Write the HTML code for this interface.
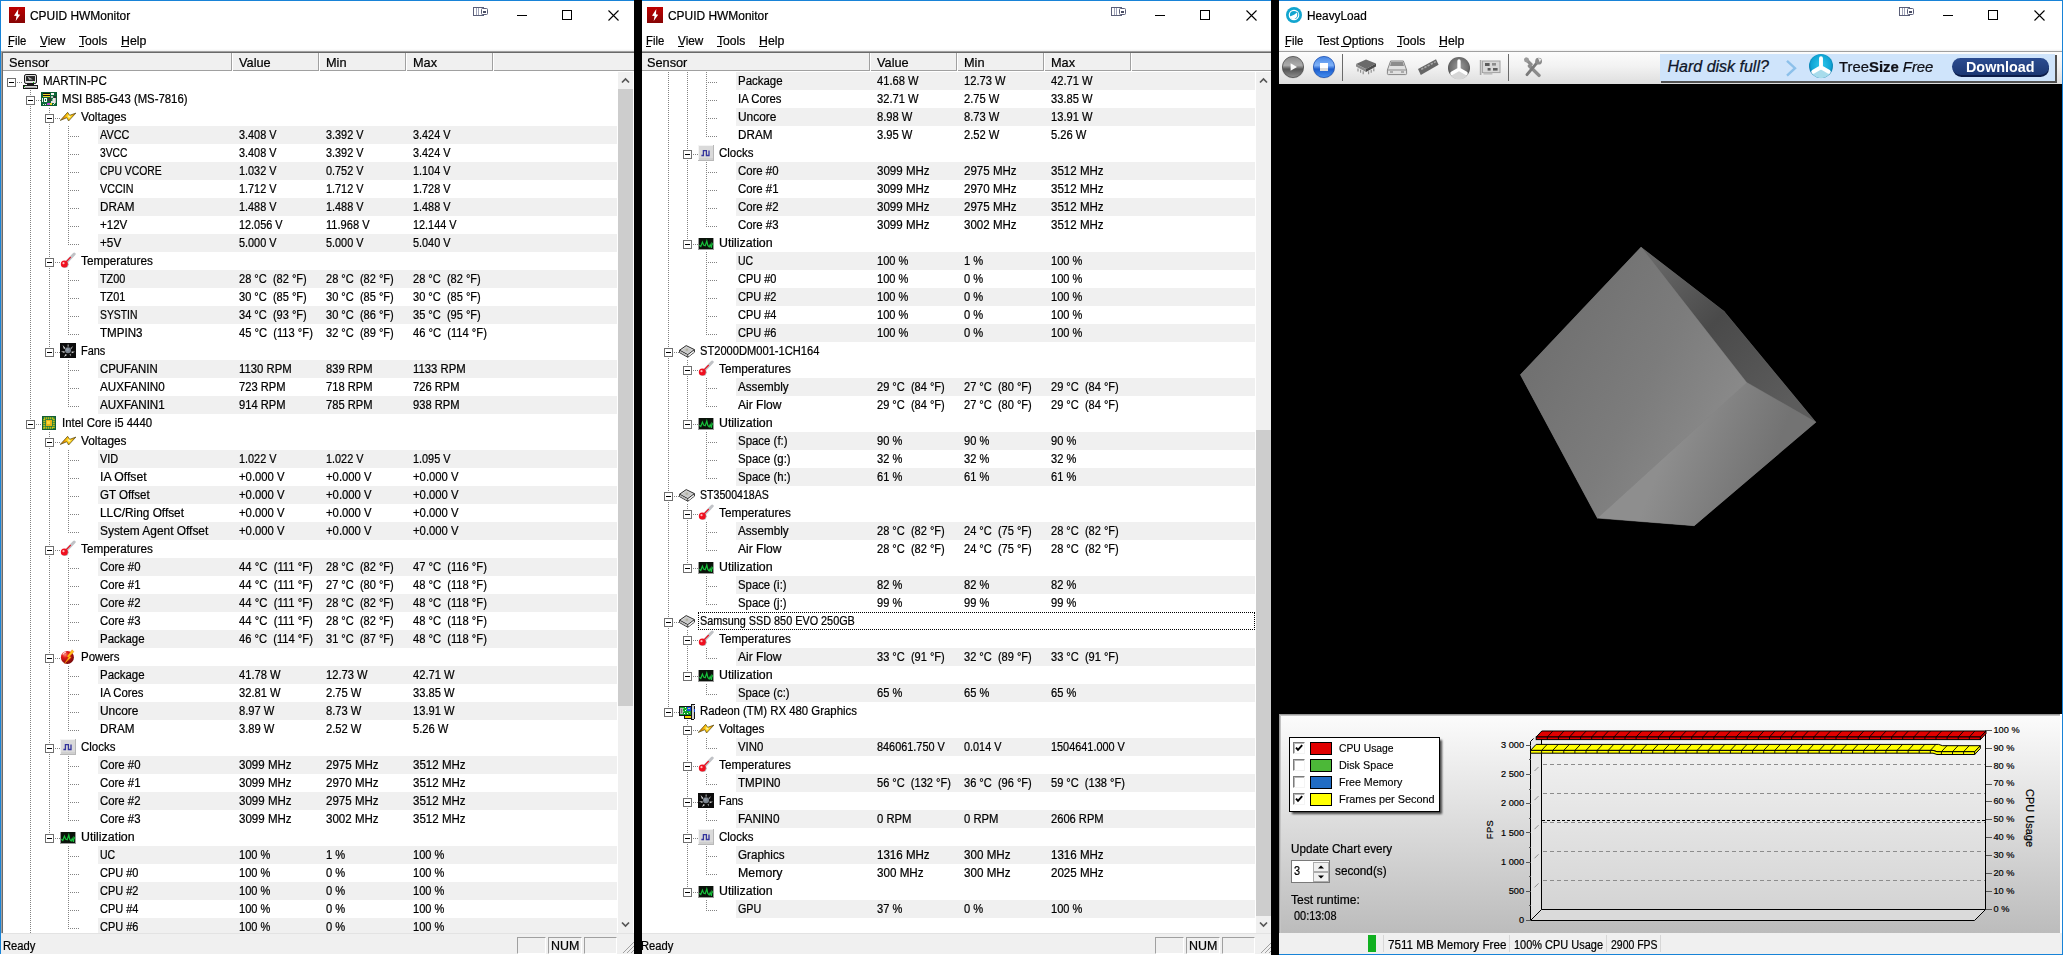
<!DOCTYPE html><html><head><meta charset="utf-8"><title>screenshot</title><style>
html,body{margin:0;padding:0}
body{width:2063px;height:955px;background:#000;position:relative;overflow:hidden;font-family:"Liberation Sans",sans-serif}
.win{position:absolute;overflow:hidden}
.in{position:absolute;top:0;width:2100px;height:955px}
i,svg,.t,.a,b{position:absolute;display:block}
.t{white-space:pre;font:12px/18px "Liberation Sans",sans-serif;color:#000;transform-origin:0 0;-webkit-text-stroke:.22px #000}
.a{white-space:pre;font-family:"Liberation Sans",sans-serif;color:#000;-webkit-text-stroke:.15px #000}
.vd{width:1px;background:linear-gradient(180deg,#828282 50%,transparent 50%) 0 0/1px 2px}
.hd{height:1px;background:linear-gradient(90deg,#828282 50%,transparent 50%) 0 0/2px 1px}
.xb{width:7px;height:7px;border:1px solid #6f6f6f;background:#fff}
.xb b{left:1px;top:3px;width:5px;height:1px;background:#000}
.fr{border:1px dotted #000}
.pane{border-top:1px solid #a0a0a0;border-left:1px solid #a0a0a0;border-right:1px solid #fff;border-bottom:1px solid #fff}
.cb{width:10px;height:10px;background:#fff;border:1px solid;border-color:#7c7c7c #f4f4f4 #f4f4f4 #7c7c7c;box-shadow:inset 1px 1px 0 #b8b8b8}
.ct{font:9.2px "Liberation Sans",sans-serif;fill:#000;stroke:#000;stroke-width:.2px}
</style></head><body>
<div class="win" style="left:0px;top:0;width:634px;height:955px;background:#fff">
<div class="in" style="left:0px">
<i style="left:98px;top:126px;width:519px;height:18px;background:#f0f0f0;"></i>
<i style="left:98px;top:162px;width:519px;height:18px;background:#f0f0f0;"></i>
<i style="left:98px;top:198px;width:519px;height:18px;background:#f0f0f0;"></i>
<i style="left:98px;top:234px;width:519px;height:18px;background:#f0f0f0;"></i>
<i style="left:98px;top:270px;width:519px;height:18px;background:#f0f0f0;"></i>
<i style="left:98px;top:306px;width:519px;height:18px;background:#f0f0f0;"></i>
<i style="left:98px;top:360px;width:519px;height:18px;background:#f0f0f0;"></i>
<i style="left:98px;top:396px;width:519px;height:18px;background:#f0f0f0;"></i>
<i style="left:98px;top:450px;width:519px;height:18px;background:#f0f0f0;"></i>
<i style="left:98px;top:486px;width:519px;height:18px;background:#f0f0f0;"></i>
<i style="left:98px;top:522px;width:519px;height:18px;background:#f0f0f0;"></i>
<i style="left:98px;top:558px;width:519px;height:18px;background:#f0f0f0;"></i>
<i style="left:98px;top:594px;width:519px;height:18px;background:#f0f0f0;"></i>
<i style="left:98px;top:630px;width:519px;height:18px;background:#f0f0f0;"></i>
<i style="left:98px;top:666px;width:519px;height:18px;background:#f0f0f0;"></i>
<i style="left:98px;top:702px;width:519px;height:18px;background:#f0f0f0;"></i>
<i style="left:98px;top:756px;width:519px;height:18px;background:#f0f0f0;"></i>
<i style="left:98px;top:792px;width:519px;height:18px;background:#f0f0f0;"></i>
<i style="left:98px;top:846px;width:519px;height:18px;background:#f0f0f0;"></i>
<i style="left:98px;top:882px;width:519px;height:18px;background:#f0f0f0;"></i>
<i style="left:98px;top:918px;width:519px;height:18px;background:#f0f0f0;"></i>
<i class="hd" style="left:17px;top:82px;width:6px;background-position:0px 0"></i>
<i class="xb" style="left:7px;top:78px"><b></b></i>
<svg style="left:23px;top:73px" width="16" height="16" viewBox="0 0 16 16"><rect x="1.5" y="1.5" width="12" height="9" rx="1.6" fill="#dedede" stroke="#161616" stroke-width="1"/><rect x="3" y="3" width="9" height="5" fill="#2c2c2c"/><path d="M4.6 3.4 9.8 6.6 6.2 6.8z" fill="#d0d0d0" opacity=".85"/><g shape-rendering="crispEdges"><rect x="10" y="9" width="1" height="1" fill="#10c010"/><rect x="4" y="11" width="7" height="1" fill="#1a1a1a"/><rect x="0" y="12" width="15" height="4" fill="#161616"/><rect x="1" y="13" width="13" height="2" fill="#d4d4d4"/><rect x="1" y="13" width="1" height="1" fill="#10c010"/><rect x="2" y="14" width="11" height="1" fill="#a8a8a8"/></g></svg>
<span class="t" style="left:43px;top:72px;transform:scaleX(0.9595);">MARTIN-PC</span>
<i class="vd" style="left:30px;top:90px;height:6px;background-position:0 0px"></i>
<i class="vd" style="left:30px;top:105px;height:3px;background-position:0 1px"></i>
<i class="hd" style="left:36px;top:100px;width:5px;background-position:0px 0"></i>
<i class="xb" style="left:26px;top:96px"><b></b></i>
<svg style="left:41px;top:91px" width="16" height="16" viewBox="0 0 16 16"><g shape-rendering="crispEdges"><rect x="0" y="1" width="16" height="14" fill="#0a5c32"/><rect x="1" y="2" width="14" height="12" fill="#0e6a3a"/><rect x="2" y="2" width="7" height="1" fill="#101010"/><rect x="2" y="3" width="7" height="1" fill="#f0d428"/><rect x="2" y="4" width="7" height="1" fill="#101010"/><rect x="2" y="5" width="7" height="1" fill="#f0d428"/><rect x="10" y="2" width="3" height="2" fill="#f2f2f2"/><rect x="10" y="5" width="2" height="2" fill="#c4c4c4"/><rect x="13" y="5" width="2" height="2" fill="#2e2e2e"/><rect x="1" y="7" width="1" height="4" fill="#f2f2f2"/><rect x="3" y="7" width="3" height="4" fill="#f8f8f8"/><rect x="4" y="8" width="1" height="2" fill="#0e6a3a"/><rect x="7" y="7" width="3" height="3" fill="#3a3636"/><rect x="12" y="7" width="2" height="5" fill="#e6e6e6"/><rect x="14" y="7" width="1" height="5" fill="#bcbcbc"/><rect x="10" y="10" width="2" height="2" fill="#e0e0e0"/><rect x="11" y="8" width="1" height="2" fill="#7cc890"/><rect x="2" y="13" width="1" height="1" fill="#e8e8e8"/><rect x="4" y="13" width="1" height="1" fill="#e8e8e8"/><rect x="6" y="12" width="3" height="2" fill="#c044d4"/><rect x="9" y="12" width="2" height="2" fill="#f0d428"/><rect x="12" y="13" width="1" height="1" fill="#d8f0d8"/><rect x="13" y="12" width="1" height="1" fill="#d8f0d8"/></g></svg>
<span class="t" style="left:62px;top:90px;transform:scaleX(0.9455);">MSI B85-G43 (MS-7816)</span>
<i class="vd" style="left:30px;top:108px;height:18px;background-position:0 0px"></i>
<i class="vd" style="left:49px;top:108px;height:6px;background-position:0 0px"></i>
<i class="vd" style="left:49px;top:123px;height:3px;background-position:0 1px"></i>
<i class="hd" style="left:55px;top:118px;width:5px;background-position:0px 0"></i>
<i class="xb" style="left:45px;top:114px"><b></b></i>
<svg style="left:60px;top:109px" width="16" height="16" viewBox="0 0 16 16"><defs><radialGradient id="vg" gradientUnits="userSpaceOnUse" cx="9.2" cy="7.4" r="6"><stop offset="0" stop-color="#fffbe0"/><stop offset=".3" stop-color="#ffd820"/><stop offset=".7" stop-color="#f0a000"/><stop offset="1" stop-color="#e08800"/></radialGradient></defs><path d="M0.2 11.5 7.6 3.3 9.7 6.3 15.9 4.1 8.6 12 6.8 8.7z" fill="url(#vg)" stroke="#4a4410" stroke-width="0.8" stroke-linejoin="round" stroke-opacity=".85"/></svg>
<span class="t" style="left:81px;top:108px;transform:scaleX(0.9892);">Voltages</span>
<i class="vd" style="left:30px;top:126px;height:18px;background-position:0 0px"></i>
<i class="vd" style="left:49px;top:126px;height:18px;background-position:0 0px"></i>
<i class="vd" style="left:68px;top:126px;height:18px;background-position:0 0px"></i>
<i class="hd" style="left:68px;top:136px;width:11px;background-position:0px 0"></i>
<span class="t" style="left:100px;top:126px;transform:scaleX(0.9044);">AVCC</span>
<span class="t" style="left:239px;top:126px;transform:scaleX(0.9052);">3.408 V</span>
<span class="t" style="left:326px;top:126px;transform:scaleX(0.9052);">3.392 V</span>
<span class="t" style="left:413px;top:126px;transform:scaleX(0.9052);">3.424 V</span>
<i class="vd" style="left:30px;top:144px;height:18px;background-position:0 0px"></i>
<i class="vd" style="left:49px;top:144px;height:18px;background-position:0 0px"></i>
<i class="vd" style="left:68px;top:144px;height:18px;background-position:0 0px"></i>
<i class="hd" style="left:68px;top:154px;width:11px;background-position:0px 0"></i>
<span class="t" style="left:100px;top:144px;transform:scaleX(0.8536);">3VCC</span>
<span class="t" style="left:239px;top:144px;transform:scaleX(0.9052);">3.408 V</span>
<span class="t" style="left:326px;top:144px;transform:scaleX(0.9052);">3.392 V</span>
<span class="t" style="left:413px;top:144px;transform:scaleX(0.9052);">3.424 V</span>
<i class="vd" style="left:30px;top:162px;height:18px;background-position:0 0px"></i>
<i class="vd" style="left:49px;top:162px;height:18px;background-position:0 0px"></i>
<i class="vd" style="left:68px;top:162px;height:18px;background-position:0 0px"></i>
<i class="hd" style="left:68px;top:172px;width:11px;background-position:0px 0"></i>
<span class="t" style="left:100px;top:162px;transform:scaleX(0.8653);">CPU VCORE</span>
<span class="t" style="left:239px;top:162px;transform:scaleX(0.9052);">1.032 V</span>
<span class="t" style="left:326px;top:162px;transform:scaleX(0.9052);">0.752 V</span>
<span class="t" style="left:413px;top:162px;transform:scaleX(0.9052);">1.104 V</span>
<i class="vd" style="left:30px;top:180px;height:18px;background-position:0 0px"></i>
<i class="vd" style="left:49px;top:180px;height:18px;background-position:0 0px"></i>
<i class="vd" style="left:68px;top:180px;height:18px;background-position:0 0px"></i>
<i class="hd" style="left:68px;top:190px;width:11px;background-position:0px 0"></i>
<span class="t" style="left:100px;top:180px;transform:scaleX(0.8945);">VCCIN</span>
<span class="t" style="left:239px;top:180px;transform:scaleX(0.9052);">1.712 V</span>
<span class="t" style="left:326px;top:180px;transform:scaleX(0.9052);">1.712 V</span>
<span class="t" style="left:413px;top:180px;transform:scaleX(0.9052);">1.728 V</span>
<i class="vd" style="left:30px;top:198px;height:18px;background-position:0 0px"></i>
<i class="vd" style="left:49px;top:198px;height:18px;background-position:0 0px"></i>
<i class="vd" style="left:68px;top:198px;height:18px;background-position:0 0px"></i>
<i class="hd" style="left:68px;top:208px;width:11px;background-position:0px 0"></i>
<span class="t" style="left:100px;top:198px;transform:scaleX(0.9738);">DRAM</span>
<span class="t" style="left:239px;top:198px;transform:scaleX(0.9052);">1.488 V</span>
<span class="t" style="left:326px;top:198px;transform:scaleX(0.9052);">1.488 V</span>
<span class="t" style="left:413px;top:198px;transform:scaleX(0.9052);">1.488 V</span>
<i class="vd" style="left:30px;top:216px;height:18px;background-position:0 0px"></i>
<i class="vd" style="left:49px;top:216px;height:18px;background-position:0 0px"></i>
<i class="vd" style="left:68px;top:216px;height:18px;background-position:0 0px"></i>
<i class="hd" style="left:68px;top:226px;width:11px;background-position:0px 0"></i>
<span class="t" style="left:100px;top:216px;transform:scaleX(0.9635);">+12V</span>
<span class="t" style="left:239px;top:216px;transform:scaleX(0.9058);">12.056 V</span>
<span class="t" style="left:326px;top:216px;transform:scaleX(0.9229);">11.968 V</span>
<span class="t" style="left:413px;top:216px;transform:scaleX(0.9058);">12.144 V</span>
<i class="vd" style="left:30px;top:234px;height:18px;background-position:0 0px"></i>
<i class="vd" style="left:49px;top:234px;height:18px;background-position:0 0px"></i>
<i class="vd" style="left:68px;top:234px;height:11px;background-position:0 0px"></i>
<i class="hd" style="left:68px;top:244px;width:11px;background-position:0px 0"></i>
<span class="t" style="left:100px;top:234px;transform:scaleX(0.9800);">+5V</span>
<span class="t" style="left:239px;top:234px;transform:scaleX(0.9052);">5.000 V</span>
<span class="t" style="left:326px;top:234px;transform:scaleX(0.9052);">5.000 V</span>
<span class="t" style="left:413px;top:234px;transform:scaleX(0.9052);">5.040 V</span>
<i class="vd" style="left:30px;top:252px;height:18px;background-position:0 0px"></i>
<i class="vd" style="left:49px;top:252px;height:6px;background-position:0 0px"></i>
<i class="vd" style="left:49px;top:267px;height:3px;background-position:0 1px"></i>
<i class="hd" style="left:55px;top:262px;width:5px;background-position:0px 0"></i>
<i class="xb" style="left:45px;top:258px"><b></b></i>
<svg style="left:60px;top:252px" width="16" height="16" viewBox="0 0 16 16"><path d="M6 10.600 14.200 2" stroke="#c0c2c6" stroke-width="3" stroke-linecap="round"/><path d="M6.2 11.2 8 12.4" stroke="#909090" stroke-width="1.6" stroke-linecap="round" opacity=".6"/><path d="M5.6 10.400 10.4 5.400" stroke="#f00c1c" stroke-width="1.300" stroke-linecap="round"/><circle cx="5" cy="12.4" r="3.5" fill="#8c8c8c" opacity=".55"/><circle cx="4.3" cy="11.9" r="3.5" fill="#f01020"/><circle cx="3.5" cy="11.2" r="1.1" fill="#ffb8b8"/></svg>
<span class="t" style="left:81px;top:252px;transform:scaleX(0.9794);">Temperatures</span>
<i class="vd" style="left:30px;top:270px;height:18px;background-position:0 0px"></i>
<i class="vd" style="left:49px;top:270px;height:18px;background-position:0 0px"></i>
<i class="vd" style="left:68px;top:270px;height:18px;background-position:0 0px"></i>
<i class="hd" style="left:68px;top:280px;width:11px;background-position:0px 0"></i>
<span class="t" style="left:100px;top:270px;transform:scaleX(0.9034);">TZ00</span>
<span class="t" style="left:239px;top:270px;transform:scaleX(0.9210);">28 °C  (82 °F)</span>
<span class="t" style="left:326px;top:270px;transform:scaleX(0.9210);">28 °C  (82 °F)</span>
<span class="t" style="left:413px;top:270px;transform:scaleX(0.9210);">28 °C  (82 °F)</span>
<i class="vd" style="left:30px;top:288px;height:18px;background-position:0 0px"></i>
<i class="vd" style="left:49px;top:288px;height:18px;background-position:0 0px"></i>
<i class="vd" style="left:68px;top:288px;height:18px;background-position:0 0px"></i>
<i class="hd" style="left:68px;top:298px;width:11px;background-position:0px 0"></i>
<span class="t" style="left:100px;top:288px;transform:scaleX(0.9034);">TZ01</span>
<span class="t" style="left:239px;top:288px;transform:scaleX(0.9210);">30 °C  (85 °F)</span>
<span class="t" style="left:326px;top:288px;transform:scaleX(0.9210);">30 °C  (85 °F)</span>
<span class="t" style="left:413px;top:288px;transform:scaleX(0.9210);">30 °C  (85 °F)</span>
<i class="vd" style="left:30px;top:306px;height:18px;background-position:0 0px"></i>
<i class="vd" style="left:49px;top:306px;height:18px;background-position:0 0px"></i>
<i class="vd" style="left:68px;top:306px;height:18px;background-position:0 0px"></i>
<i class="hd" style="left:68px;top:316px;width:11px;background-position:0px 0"></i>
<span class="t" style="left:100px;top:306px;transform:scaleX(0.8639);">SYSTIN</span>
<span class="t" style="left:239px;top:306px;transform:scaleX(0.9210);">34 °C  (93 °F)</span>
<span class="t" style="left:326px;top:306px;transform:scaleX(0.9210);">30 °C  (86 °F)</span>
<span class="t" style="left:413px;top:306px;transform:scaleX(0.9210);">35 °C  (95 °F)</span>
<i class="vd" style="left:30px;top:324px;height:18px;background-position:0 0px"></i>
<i class="vd" style="left:49px;top:324px;height:18px;background-position:0 0px"></i>
<i class="vd" style="left:68px;top:324px;height:11px;background-position:0 0px"></i>
<i class="hd" style="left:68px;top:334px;width:11px;background-position:0px 0"></i>
<span class="t" style="left:100px;top:324px;transform:scaleX(0.9659);">TMPIN3</span>
<span class="t" style="left:239px;top:324px;transform:scaleX(0.9304);">45 °C  (113 °F)</span>
<span class="t" style="left:326px;top:324px;transform:scaleX(0.9210);">32 °C  (89 °F)</span>
<span class="t" style="left:413px;top:324px;transform:scaleX(0.9304);">46 °C  (114 °F)</span>
<i class="vd" style="left:30px;top:342px;height:18px;background-position:0 0px"></i>
<i class="vd" style="left:49px;top:342px;height:6px;background-position:0 0px"></i>
<i class="hd" style="left:55px;top:352px;width:5px;background-position:0px 0"></i>
<i class="xb" style="left:45px;top:348px"><b></b></i>
<svg style="left:60px;top:343px" width="16" height="16" viewBox="0 0 16 16"><rect x="0" y="0" width="16" height="15" fill="#0c0c0c" shape-rendering="crispEdges"/><g fill="#dcdcdc"><path d="M2.6 2 5.4 5 4 6.2z"/><path d="M8 0.6 9 3.4 7.4 3.6z" opacity=".8"/><path d="M13.2 3 10.4 5 11.4 6.2z" opacity=".7"/><path d="M15 8.8 11.6 8.4 11.8 10.2z"/><path d="M1 8.4 4.6 8.2 4.4 10z"/><path d="M4 14 5.6 11 7 12z"/><path d="M11 13.6 9.4 11.4 10.8 10.8z" opacity=".7"/></g><circle cx="8" cy="7.2" r="3" fill="#7a838e"/><circle cx="7.4" cy="6.6" r="1.6" fill="#8c96a2"/></svg>
<span class="t" style="left:81px;top:342px;transform:scaleX(0.9105);">Fans</span>
<i class="vd" style="left:30px;top:360px;height:18px;background-position:0 0px"></i>
<i class="vd" style="left:68px;top:360px;height:18px;background-position:0 0px"></i>
<i class="hd" style="left:68px;top:370px;width:11px;background-position:0px 0"></i>
<span class="t" style="left:100px;top:360px;transform:scaleX(0.9507);">CPUFANIN</span>
<span class="t" style="left:239px;top:360px;transform:scaleX(0.9430);">1130 RPM</span>
<span class="t" style="left:326px;top:360px;transform:scaleX(0.9306);">839 RPM</span>
<span class="t" style="left:413px;top:360px;transform:scaleX(0.9430);">1133 RPM</span>
<i class="vd" style="left:30px;top:378px;height:18px;background-position:0 0px"></i>
<i class="vd" style="left:68px;top:378px;height:18px;background-position:0 0px"></i>
<i class="hd" style="left:68px;top:388px;width:11px;background-position:0px 0"></i>
<span class="t" style="left:100px;top:378px;transform:scaleX(0.9712);">AUXFANIN0</span>
<span class="t" style="left:239px;top:378px;transform:scaleX(0.9306);">723 RPM</span>
<span class="t" style="left:326px;top:378px;transform:scaleX(0.9306);">718 RPM</span>
<span class="t" style="left:413px;top:378px;transform:scaleX(0.9306);">726 RPM</span>
<i class="vd" style="left:30px;top:396px;height:18px;background-position:0 0px"></i>
<i class="vd" style="left:68px;top:396px;height:11px;background-position:0 0px"></i>
<i class="hd" style="left:68px;top:406px;width:11px;background-position:0px 0"></i>
<span class="t" style="left:100px;top:396px;transform:scaleX(0.9712);">AUXFANIN1</span>
<span class="t" style="left:239px;top:396px;transform:scaleX(0.9306);">914 RPM</span>
<span class="t" style="left:326px;top:396px;transform:scaleX(0.9306);">785 RPM</span>
<span class="t" style="left:413px;top:396px;transform:scaleX(0.9306);">938 RPM</span>
<i class="vd" style="left:30px;top:414px;height:6px;background-position:0 0px"></i>
<i class="vd" style="left:30px;top:429px;height:3px;background-position:0 1px"></i>
<i class="hd" style="left:36px;top:424px;width:5px;background-position:0px 0"></i>
<i class="xb" style="left:26px;top:420px"><b></b></i>
<svg style="left:41px;top:415px" width="16" height="16" viewBox="0 0 16 16"><g shape-rendering="crispEdges"><rect x="1" y="1" width="14" height="14" fill="#145c34"/><rect x="2" y="2" width="12" height="12" fill="#1c7a44"/></g><rect x="3.25" y="3.25" width="9.5" height="9.5" fill="none" stroke="#f4d400" stroke-width="2" stroke-dasharray="1 1"/><rect x="5" y="5" width="6" height="6" fill="#e8b418"/><rect x="6" y="6" width="3" height="3" fill="#fcd838"/></svg>
<span class="t" style="left:62px;top:414px;transform:scaleX(0.9508);">Intel Core i5 4440</span>
<i class="vd" style="left:30px;top:432px;height:18px;background-position:0 0px"></i>
<i class="vd" style="left:49px;top:432px;height:6px;background-position:0 0px"></i>
<i class="vd" style="left:49px;top:447px;height:3px;background-position:0 1px"></i>
<i class="hd" style="left:55px;top:442px;width:5px;background-position:0px 0"></i>
<i class="xb" style="left:45px;top:438px"><b></b></i>
<svg style="left:60px;top:433px" width="16" height="16" viewBox="0 0 16 16"><defs><radialGradient id="vg" gradientUnits="userSpaceOnUse" cx="9.2" cy="7.4" r="6"><stop offset="0" stop-color="#fffbe0"/><stop offset=".3" stop-color="#ffd820"/><stop offset=".7" stop-color="#f0a000"/><stop offset="1" stop-color="#e08800"/></radialGradient></defs><path d="M0.2 11.5 7.6 3.3 9.7 6.3 15.9 4.1 8.6 12 6.8 8.7z" fill="url(#vg)" stroke="#4a4410" stroke-width="0.8" stroke-linejoin="round" stroke-opacity=".85"/></svg>
<span class="t" style="left:81px;top:432px;transform:scaleX(0.9892);">Voltages</span>
<i class="vd" style="left:30px;top:450px;height:18px;background-position:0 0px"></i>
<i class="vd" style="left:49px;top:450px;height:18px;background-position:0 0px"></i>
<i class="vd" style="left:68px;top:450px;height:18px;background-position:0 0px"></i>
<i class="hd" style="left:68px;top:460px;width:11px;background-position:0px 0"></i>
<span class="t" style="left:100px;top:450px;transform:scaleX(0.9106);">VID</span>
<span class="t" style="left:239px;top:450px;transform:scaleX(0.9052);">1.022 V</span>
<span class="t" style="left:326px;top:450px;transform:scaleX(0.9052);">1.022 V</span>
<span class="t" style="left:413px;top:450px;transform:scaleX(0.9052);">1.095 V</span>
<i class="vd" style="left:30px;top:468px;height:18px;background-position:0 0px"></i>
<i class="vd" style="left:49px;top:468px;height:18px;background-position:0 0px"></i>
<i class="vd" style="left:68px;top:468px;height:18px;background-position:0 0px"></i>
<i class="hd" style="left:68px;top:478px;width:11px;background-position:0px 0"></i>
<span class="t" style="left:100px;top:468px;transform:scaleX(1.0163);">IA Offset</span>
<span class="t" style="left:239px;top:468px;transform:scaleX(0.9414);">+0.000 V</span>
<span class="t" style="left:326px;top:468px;transform:scaleX(0.9414);">+0.000 V</span>
<span class="t" style="left:413px;top:468px;transform:scaleX(0.9414);">+0.000 V</span>
<i class="vd" style="left:30px;top:486px;height:18px;background-position:0 0px"></i>
<i class="vd" style="left:49px;top:486px;height:18px;background-position:0 0px"></i>
<i class="vd" style="left:68px;top:486px;height:18px;background-position:0 0px"></i>
<i class="hd" style="left:68px;top:496px;width:11px;background-position:0px 0"></i>
<span class="t" style="left:100px;top:486px;transform:scaleX(0.9615);">GT Offset</span>
<span class="t" style="left:239px;top:486px;transform:scaleX(0.9414);">+0.000 V</span>
<span class="t" style="left:326px;top:486px;transform:scaleX(0.9414);">+0.000 V</span>
<span class="t" style="left:413px;top:486px;transform:scaleX(0.9414);">+0.000 V</span>
<i class="vd" style="left:30px;top:504px;height:18px;background-position:0 0px"></i>
<i class="vd" style="left:49px;top:504px;height:18px;background-position:0 0px"></i>
<i class="vd" style="left:68px;top:504px;height:18px;background-position:0 0px"></i>
<i class="hd" style="left:68px;top:514px;width:11px;background-position:0px 0"></i>
<span class="t" style="left:100px;top:504px;transform:scaleX(0.9864);">LLC/Ring Offset</span>
<span class="t" style="left:239px;top:504px;transform:scaleX(0.9414);">+0.000 V</span>
<span class="t" style="left:326px;top:504px;transform:scaleX(0.9414);">+0.000 V</span>
<span class="t" style="left:413px;top:504px;transform:scaleX(0.9414);">+0.000 V</span>
<i class="vd" style="left:30px;top:522px;height:18px;background-position:0 0px"></i>
<i class="vd" style="left:49px;top:522px;height:18px;background-position:0 0px"></i>
<i class="vd" style="left:68px;top:522px;height:11px;background-position:0 0px"></i>
<i class="hd" style="left:68px;top:532px;width:11px;background-position:0px 0"></i>
<span class="t" style="left:100px;top:522px;transform:scaleX(0.9919);">System Agent Offset</span>
<span class="t" style="left:239px;top:522px;transform:scaleX(0.9414);">+0.000 V</span>
<span class="t" style="left:326px;top:522px;transform:scaleX(0.9414);">+0.000 V</span>
<span class="t" style="left:413px;top:522px;transform:scaleX(0.9414);">+0.000 V</span>
<i class="vd" style="left:30px;top:540px;height:18px;background-position:0 0px"></i>
<i class="vd" style="left:49px;top:540px;height:6px;background-position:0 0px"></i>
<i class="vd" style="left:49px;top:555px;height:3px;background-position:0 1px"></i>
<i class="hd" style="left:55px;top:550px;width:5px;background-position:0px 0"></i>
<i class="xb" style="left:45px;top:546px"><b></b></i>
<svg style="left:60px;top:540px" width="16" height="16" viewBox="0 0 16 16"><path d="M6 10.600 14.200 2" stroke="#c0c2c6" stroke-width="3" stroke-linecap="round"/><path d="M6.2 11.2 8 12.4" stroke="#909090" stroke-width="1.6" stroke-linecap="round" opacity=".6"/><path d="M5.6 10.400 10.4 5.400" stroke="#f00c1c" stroke-width="1.300" stroke-linecap="round"/><circle cx="5" cy="12.4" r="3.5" fill="#8c8c8c" opacity=".55"/><circle cx="4.3" cy="11.9" r="3.5" fill="#f01020"/><circle cx="3.5" cy="11.2" r="1.1" fill="#ffb8b8"/></svg>
<span class="t" style="left:81px;top:540px;transform:scaleX(0.9794);">Temperatures</span>
<i class="vd" style="left:30px;top:558px;height:18px;background-position:0 0px"></i>
<i class="vd" style="left:49px;top:558px;height:18px;background-position:0 0px"></i>
<i class="vd" style="left:68px;top:558px;height:18px;background-position:0 0px"></i>
<i class="hd" style="left:68px;top:568px;width:11px;background-position:0px 0"></i>
<span class="t" style="left:100px;top:558px;transform:scaleX(0.9482);">Core #0</span>
<span class="t" style="left:239px;top:558px;transform:scaleX(0.9410);">44 °C  (111 °F)</span>
<span class="t" style="left:326px;top:558px;transform:scaleX(0.9210);">28 °C  (82 °F)</span>
<span class="t" style="left:413px;top:558px;transform:scaleX(0.9304);">47 °C  (116 °F)</span>
<i class="vd" style="left:30px;top:576px;height:18px;background-position:0 0px"></i>
<i class="vd" style="left:49px;top:576px;height:18px;background-position:0 0px"></i>
<i class="vd" style="left:68px;top:576px;height:18px;background-position:0 0px"></i>
<i class="hd" style="left:68px;top:586px;width:11px;background-position:0px 0"></i>
<span class="t" style="left:100px;top:576px;transform:scaleX(0.9482);">Core #1</span>
<span class="t" style="left:239px;top:576px;transform:scaleX(0.9410);">44 °C  (111 °F)</span>
<span class="t" style="left:326px;top:576px;transform:scaleX(0.9210);">27 °C  (80 °F)</span>
<span class="t" style="left:413px;top:576px;transform:scaleX(0.9304);">48 °C  (118 °F)</span>
<i class="vd" style="left:30px;top:594px;height:18px;background-position:0 0px"></i>
<i class="vd" style="left:49px;top:594px;height:18px;background-position:0 0px"></i>
<i class="vd" style="left:68px;top:594px;height:18px;background-position:0 0px"></i>
<i class="hd" style="left:68px;top:604px;width:11px;background-position:0px 0"></i>
<span class="t" style="left:100px;top:594px;transform:scaleX(0.9482);">Core #2</span>
<span class="t" style="left:239px;top:594px;transform:scaleX(0.9410);">44 °C  (111 °F)</span>
<span class="t" style="left:326px;top:594px;transform:scaleX(0.9210);">28 °C  (82 °F)</span>
<span class="t" style="left:413px;top:594px;transform:scaleX(0.9304);">48 °C  (118 °F)</span>
<i class="vd" style="left:30px;top:612px;height:18px;background-position:0 0px"></i>
<i class="vd" style="left:49px;top:612px;height:18px;background-position:0 0px"></i>
<i class="vd" style="left:68px;top:612px;height:18px;background-position:0 0px"></i>
<i class="hd" style="left:68px;top:622px;width:11px;background-position:0px 0"></i>
<span class="t" style="left:100px;top:612px;transform:scaleX(0.9482);">Core #3</span>
<span class="t" style="left:239px;top:612px;transform:scaleX(0.9410);">44 °C  (111 °F)</span>
<span class="t" style="left:326px;top:612px;transform:scaleX(0.9210);">28 °C  (82 °F)</span>
<span class="t" style="left:413px;top:612px;transform:scaleX(0.9304);">48 °C  (118 °F)</span>
<i class="vd" style="left:30px;top:630px;height:18px;background-position:0 0px"></i>
<i class="vd" style="left:49px;top:630px;height:18px;background-position:0 0px"></i>
<i class="vd" style="left:68px;top:630px;height:11px;background-position:0 0px"></i>
<i class="hd" style="left:68px;top:640px;width:11px;background-position:0px 0"></i>
<span class="t" style="left:100px;top:630px;transform:scaleX(0.9535);">Package</span>
<span class="t" style="left:239px;top:630px;transform:scaleX(0.9304);">46 °C  (114 °F)</span>
<span class="t" style="left:326px;top:630px;transform:scaleX(0.9210);">31 °C  (87 °F)</span>
<span class="t" style="left:413px;top:630px;transform:scaleX(0.9304);">48 °C  (118 °F)</span>
<i class="vd" style="left:30px;top:648px;height:18px;background-position:0 0px"></i>
<i class="vd" style="left:49px;top:648px;height:6px;background-position:0 0px"></i>
<i class="vd" style="left:49px;top:663px;height:3px;background-position:0 1px"></i>
<i class="hd" style="left:55px;top:658px;width:5px;background-position:0px 0"></i>
<i class="xb" style="left:45px;top:654px"><b></b></i>
<svg style="left:60px;top:649px" width="16" height="16" viewBox="0 0 16 16"><defs><radialGradient id="pg" cx=".32" cy=".28" r=".85"><stop offset="0" stop-color="#ff8a78"/><stop offset=".3" stop-color="#e01818"/><stop offset="1" stop-color="#640606"/></radialGradient></defs><circle cx="7.4" cy="8.4" r="6.5" fill="url(#pg)"/><path d="M12.2 0.8 7 7.6 8.8 8.2 4.6 14.4 11.2 8.2 9.4 7.4 13.8 2.8z" fill="#ffc41c" stroke="#f07c00" stroke-width=".5"/><path d="M2.8 5.6c.8-1.6 2-2.4 3.2-2.6" stroke="#fff" stroke-width="1.1" fill="none" opacity=".85"/></svg>
<span class="t" style="left:81px;top:648px;transform:scaleX(0.9611);">Powers</span>
<i class="vd" style="left:30px;top:666px;height:18px;background-position:0 0px"></i>
<i class="vd" style="left:49px;top:666px;height:18px;background-position:0 0px"></i>
<i class="vd" style="left:68px;top:666px;height:18px;background-position:0 0px"></i>
<i class="hd" style="left:68px;top:676px;width:11px;background-position:0px 0"></i>
<span class="t" style="left:100px;top:666px;transform:scaleX(0.9535);">Package</span>
<span class="t" style="left:239px;top:666px;transform:scaleX(0.9285);">41.78 W</span>
<span class="t" style="left:326px;top:666px;transform:scaleX(0.9285);">12.73 W</span>
<span class="t" style="left:413px;top:666px;transform:scaleX(0.9285);">42.71 W</span>
<i class="vd" style="left:30px;top:684px;height:18px;background-position:0 0px"></i>
<i class="vd" style="left:49px;top:684px;height:18px;background-position:0 0px"></i>
<i class="vd" style="left:68px;top:684px;height:18px;background-position:0 0px"></i>
<i class="hd" style="left:68px;top:694px;width:11px;background-position:0px 0"></i>
<span class="t" style="left:100px;top:684px;transform:scaleX(0.9456);">IA Cores</span>
<span class="t" style="left:239px;top:684px;transform:scaleX(0.9285);">32.81 W</span>
<span class="t" style="left:326px;top:684px;transform:scaleX(0.9317);">2.75 W</span>
<span class="t" style="left:413px;top:684px;transform:scaleX(0.9285);">33.85 W</span>
<i class="vd" style="left:30px;top:702px;height:18px;background-position:0 0px"></i>
<i class="vd" style="left:49px;top:702px;height:18px;background-position:0 0px"></i>
<i class="vd" style="left:68px;top:702px;height:18px;background-position:0 0px"></i>
<i class="hd" style="left:68px;top:712px;width:11px;background-position:0px 0"></i>
<span class="t" style="left:100px;top:702px;transform:scaleX(0.9941);">Uncore</span>
<span class="t" style="left:239px;top:702px;transform:scaleX(0.9317);">8.97 W</span>
<span class="t" style="left:326px;top:702px;transform:scaleX(0.9317);">8.73 W</span>
<span class="t" style="left:413px;top:702px;transform:scaleX(0.9285);">13.91 W</span>
<i class="vd" style="left:30px;top:720px;height:18px;background-position:0 0px"></i>
<i class="vd" style="left:49px;top:720px;height:18px;background-position:0 0px"></i>
<i class="vd" style="left:68px;top:720px;height:11px;background-position:0 0px"></i>
<i class="hd" style="left:68px;top:730px;width:11px;background-position:0px 0"></i>
<span class="t" style="left:100px;top:720px;transform:scaleX(0.9738);">DRAM</span>
<span class="t" style="left:239px;top:720px;transform:scaleX(0.9317);">3.89 W</span>
<span class="t" style="left:326px;top:720px;transform:scaleX(0.9317);">2.52 W</span>
<span class="t" style="left:413px;top:720px;transform:scaleX(0.9317);">5.26 W</span>
<i class="vd" style="left:30px;top:738px;height:18px;background-position:0 0px"></i>
<i class="vd" style="left:49px;top:738px;height:6px;background-position:0 0px"></i>
<i class="vd" style="left:49px;top:753px;height:3px;background-position:0 1px"></i>
<i class="hd" style="left:55px;top:748px;width:5px;background-position:0px 0"></i>
<i class="xb" style="left:45px;top:744px"><b></b></i>
<svg style="left:60px;top:739px" width="16" height="16" viewBox="0 0 16 16"><g shape-rendering="crispEdges"><rect x="0" y="0" width="16" height="16" fill="#b8b8b8"/><rect x="0" y="0" width="15" height="15" fill="#f4f4f4"/><rect x="1" y="1" width="14" height="14" fill="#dadada"/><rect x="1" y="13" width="14" height="2" fill="#cfcfcf"/></g><path d="M3.4 10.5h2V5.6h3v4.9h2.6V5.4" fill="none" stroke="#34349c" stroke-width="1.3"/></svg>
<span class="t" style="left:81px;top:738px;transform:scaleX(0.9557);">Clocks</span>
<i class="vd" style="left:30px;top:756px;height:18px;background-position:0 0px"></i>
<i class="vd" style="left:49px;top:756px;height:18px;background-position:0 0px"></i>
<i class="vd" style="left:68px;top:756px;height:18px;background-position:0 0px"></i>
<i class="hd" style="left:68px;top:766px;width:11px;background-position:0px 0"></i>
<span class="t" style="left:100px;top:756px;transform:scaleX(0.9482);">Core #0</span>
<span class="t" style="left:239px;top:756px;transform:scaleX(0.9622);">3099 MHz</span>
<span class="t" style="left:326px;top:756px;transform:scaleX(0.9622);">2975 MHz</span>
<span class="t" style="left:413px;top:756px;transform:scaleX(0.9622);">3512 MHz</span>
<i class="vd" style="left:30px;top:774px;height:18px;background-position:0 0px"></i>
<i class="vd" style="left:49px;top:774px;height:18px;background-position:0 0px"></i>
<i class="vd" style="left:68px;top:774px;height:18px;background-position:0 0px"></i>
<i class="hd" style="left:68px;top:784px;width:11px;background-position:0px 0"></i>
<span class="t" style="left:100px;top:774px;transform:scaleX(0.9482);">Core #1</span>
<span class="t" style="left:239px;top:774px;transform:scaleX(0.9622);">3099 MHz</span>
<span class="t" style="left:326px;top:774px;transform:scaleX(0.9622);">2970 MHz</span>
<span class="t" style="left:413px;top:774px;transform:scaleX(0.9622);">3512 MHz</span>
<i class="vd" style="left:30px;top:792px;height:18px;background-position:0 0px"></i>
<i class="vd" style="left:49px;top:792px;height:18px;background-position:0 0px"></i>
<i class="vd" style="left:68px;top:792px;height:18px;background-position:0 0px"></i>
<i class="hd" style="left:68px;top:802px;width:11px;background-position:0px 0"></i>
<span class="t" style="left:100px;top:792px;transform:scaleX(0.9482);">Core #2</span>
<span class="t" style="left:239px;top:792px;transform:scaleX(0.9622);">3099 MHz</span>
<span class="t" style="left:326px;top:792px;transform:scaleX(0.9622);">2975 MHz</span>
<span class="t" style="left:413px;top:792px;transform:scaleX(0.9622);">3512 MHz</span>
<i class="vd" style="left:30px;top:810px;height:18px;background-position:0 0px"></i>
<i class="vd" style="left:49px;top:810px;height:18px;background-position:0 0px"></i>
<i class="vd" style="left:68px;top:810px;height:11px;background-position:0 0px"></i>
<i class="hd" style="left:68px;top:820px;width:11px;background-position:0px 0"></i>
<span class="t" style="left:100px;top:810px;transform:scaleX(0.9482);">Core #3</span>
<span class="t" style="left:239px;top:810px;transform:scaleX(0.9622);">3099 MHz</span>
<span class="t" style="left:326px;top:810px;transform:scaleX(0.9622);">3002 MHz</span>
<span class="t" style="left:413px;top:810px;transform:scaleX(0.9622);">3512 MHz</span>
<i class="vd" style="left:30px;top:828px;height:18px;background-position:0 0px"></i>
<i class="vd" style="left:49px;top:828px;height:6px;background-position:0 0px"></i>
<i class="hd" style="left:55px;top:838px;width:5px;background-position:0px 0"></i>
<i class="xb" style="left:45px;top:834px"><b></b></i>
<svg style="left:60px;top:829px" width="16" height="16" viewBox="0 0 16 16"><g shape-rendering="crispEdges"><rect x="0" y="3" width="16" height="12" fill="#9c9c9c"/><rect x="1" y="3" width="14" height="11" fill="#0a120a"/></g><path d="M1.4 10.2 2.8 11.4 4.4 7 5.6 10 7.2 10.8 8.8 6 9.8 10.4 11.2 12 12.2 9.6 13.4 12.8 14 8.4 14.8 9.6" fill="none" stroke="#18c43c" stroke-width="1.15"/></svg>
<span class="t" style="left:81px;top:828px;transform:scaleX(1.0311);">Utilization</span>
<i class="vd" style="left:30px;top:846px;height:18px;background-position:0 0px"></i>
<i class="vd" style="left:68px;top:846px;height:18px;background-position:0 0px"></i>
<i class="hd" style="left:68px;top:856px;width:11px;background-position:0px 0"></i>
<span class="t" style="left:100px;top:846px;transform:scaleX(0.8759);">UC</span>
<span class="t" style="left:239px;top:846px;transform:scaleX(0.9220);">100 %</span>
<span class="t" style="left:326px;top:846px;transform:scaleX(0.9299);">1 %</span>
<span class="t" style="left:413px;top:846px;transform:scaleX(0.9220);">100 %</span>
<i class="vd" style="left:30px;top:864px;height:18px;background-position:0 0px"></i>
<i class="vd" style="left:68px;top:864px;height:18px;background-position:0 0px"></i>
<i class="hd" style="left:68px;top:874px;width:11px;background-position:0px 0"></i>
<span class="t" style="left:100px;top:864px;transform:scaleX(0.9152);">CPU #0</span>
<span class="t" style="left:239px;top:864px;transform:scaleX(0.9220);">100 %</span>
<span class="t" style="left:326px;top:864px;transform:scaleX(0.9299);">0 %</span>
<span class="t" style="left:413px;top:864px;transform:scaleX(0.9220);">100 %</span>
<i class="vd" style="left:30px;top:882px;height:18px;background-position:0 0px"></i>
<i class="vd" style="left:68px;top:882px;height:18px;background-position:0 0px"></i>
<i class="hd" style="left:68px;top:892px;width:11px;background-position:0px 0"></i>
<span class="t" style="left:100px;top:882px;transform:scaleX(0.9152);">CPU #2</span>
<span class="t" style="left:239px;top:882px;transform:scaleX(0.9220);">100 %</span>
<span class="t" style="left:326px;top:882px;transform:scaleX(0.9299);">0 %</span>
<span class="t" style="left:413px;top:882px;transform:scaleX(0.9220);">100 %</span>
<i class="vd" style="left:30px;top:900px;height:18px;background-position:0 0px"></i>
<i class="vd" style="left:68px;top:900px;height:18px;background-position:0 0px"></i>
<i class="hd" style="left:68px;top:910px;width:11px;background-position:0px 0"></i>
<span class="t" style="left:100px;top:900px;transform:scaleX(0.9152);">CPU #4</span>
<span class="t" style="left:239px;top:900px;transform:scaleX(0.9220);">100 %</span>
<span class="t" style="left:326px;top:900px;transform:scaleX(0.9299);">0 %</span>
<span class="t" style="left:413px;top:900px;transform:scaleX(0.9220);">100 %</span>
<i class="vd" style="left:30px;top:918px;height:18px;background-position:0 0px"></i>
<i class="vd" style="left:68px;top:918px;height:11px;background-position:0 0px"></i>
<i class="hd" style="left:68px;top:928px;width:11px;background-position:0px 0"></i>
<span class="t" style="left:100px;top:918px;transform:scaleX(0.9152);">CPU #6</span>
<span class="t" style="left:239px;top:918px;transform:scaleX(0.9220);">100 %</span>
<span class="t" style="left:326px;top:918px;transform:scaleX(0.9299);">0 %</span>
<span class="t" style="left:413px;top:918px;transform:scaleX(0.9220);">100 %</span>
<i class="vd" style="left:30px;top:936px;height:6px;background-position:0 0px"></i>
<i class="hd" style="left:36px;top:946px;width:5px;background-position:0px 0"></i>
<i class="xb" style="left:26px;top:942px"><b></b></i>
<svg style="left:41px;top:938px" width="16" height="16" viewBox="0 0 16 16"><path d="M0.6 6.2 7.2 1.6 15.4 5.6 15.4 8.2 8.8 13.2 0.6 8.6z" fill="#dcdcdc" stroke="#2a2a2a" stroke-width="1" stroke-linejoin="round"/><path d="M0.6 6.2 8.8 10.6 15.4 5.6" fill="none" stroke="#2a2a2a" stroke-width="1"/><path d="M8.8 10.6v2.6" stroke="#2a2a2a" stroke-width="1"/><path d="M2.6 6.2 7.2 3 13.2 5.8 8.8 9.2z" fill="#c8c8c8"/><circle cx="7.8" cy="5.8" r="1.3" fill="#b4b4a4"/><path d="M9.4 11 14.8 7v1.2L9.4 12.4z" fill="#f8f8f8"/><path d="M1.2 7.2 8.2 11v1.4L1.2 8.4z" fill="#bdbdbd"/></svg>
<span class="t" style="left:62px;top:936px;transform:scaleX(1.0120);">x</span>
<i style="left:0px;top:933px;width:640px;height:22px;background:#f0f0f0;"></i>
<i style="left:0px;top:933px;width:640px;height:1px;background:#e3e3e3;"></i>
<i style="left:618px;top:72px;width:15px;height:861px;background:#f0f0f0;"></i>
<i style="left:618px;top:89px;width:15px;height:617px;background:#cdcdcd;"></i>
<svg style="left:618px;top:72px" width="15" height="17" viewBox="0 0 15 17"><path d="M4 10.5 7.5 7 11 10.5" fill="none" stroke="#555" stroke-width="1.7"/></svg>
<svg style="left:618px;top:916px" width="15" height="17" viewBox="0 0 15 17"><path d="M4 6.5 7.5 10 11 6.5" fill="none" stroke="#555" stroke-width="1.7"/></svg>
<i style="left:0px;top:0px;width:640px;height:51px;background:#fff;"></i>
<i style="left:0px;top:49px;width:640px;height:2px;background:linear-gradient(#fff,#f0f0f0);"></i>
<i style="left:1px;top:51px;width:640px;height:1px;background:#a0a0a0;"></i>
<i style="left:2px;top:52px;width:640px;height:1px;background:#696969;"></i>
<i style="left:1px;top:51px;width:1px;height:882px;background:#a0a0a0;"></i>
<i style="left:2px;top:52px;width:1px;height:881px;background:#696969;"></i>
<i style="left:3px;top:53px;width:632px;height:17px;background:#f0f0f0;"></i>
<i style="left:3px;top:70px;width:632px;height:1px;background:#a0a0a0;"></i>
<i style="left:3px;top:71px;width:632px;height:1px;background:#fff;"></i>
<i style="left:231px;top:53px;width:1px;height:18px;background:#a0a0a0;"></i>
<i style="left:232px;top:53px;width:1px;height:18px;background:#fff;"></i>
<i style="left:318px;top:53px;width:1px;height:18px;background:#a0a0a0;"></i>
<i style="left:319px;top:53px;width:1px;height:18px;background:#fff;"></i>
<i style="left:405px;top:53px;width:1px;height:18px;background:#a0a0a0;"></i>
<i style="left:406px;top:53px;width:1px;height:18px;background:#fff;"></i>
<i style="left:492px;top:53px;width:1px;height:18px;background:#a0a0a0;"></i>
<i style="left:493px;top:53px;width:1px;height:18px;background:#fff;"></i>
<span class="t" style="left:8.5px;top:54px;transform:scaleX(0.9800);line-height:17px;font-size:13px;">Sensor</span>
<span class="t" style="left:238.5px;top:54px;transform:scaleX(0.9800);line-height:17px;font-size:13px;">Value</span>
<span class="t" style="left:325.5px;top:54px;transform:scaleX(0.9800);line-height:17px;font-size:13px;">Min</span>
<span class="t" style="left:412.5px;top:54px;transform:scaleX(0.9800);line-height:17px;font-size:13px;">Max</span>
<svg style="left:9px;top:7px" width="16" height="16" viewBox="0 0 16 16"><defs><linearGradient id="ag" x1="0" y1="0" x2="0" y2="1"><stop offset="0" stop-color="#be0000"/><stop offset="1" stop-color="#860404"/></linearGradient></defs><rect width="16" height="16" fill="url(#ag)"/><path d="M9.300 2 5 8.700 7.500 9 6.700 14 11.200 7.700 9 7.300z" fill="#fff"/></svg>
<span class="t" style="left:29.6px;top:7px;transform:scaleX(0.9951);line-height:19px;">CPUID HWMonitor</span>
<span class="t" style="left:8px;top:32px;transform:scaleX(0.9422);line-height:19px;">File</span>
<i style="left:8px;top:46px;width:5.072px;height:1px;background:#000;"></i>
<span class="t" style="left:40px;top:32px;transform:scaleX(0.9809);line-height:19px;">View</span>
<i style="left:40px;top:46px;width:6.084px;height:1px;background:#000;"></i>
<span class="t" style="left:78.5px;top:32px;transform:scaleX(1.0115);line-height:19px;">Tools</span>
<i style="left:78.5px;top:46px;width:5.072px;height:1px;background:#000;"></i>
<span class="t" style="left:121px;top:32px;transform:scaleX(1.0252);line-height:19px;">Help</span>
<i style="left:121px;top:46px;width:8.108px;height:1px;background:#000;"></i>
<svg style="left:472px;top:7px" width="17" height="11" viewBox="0 0 17 11"><rect x="1.5" y="0.5" width="10" height="8" fill="#fff" stroke="#5a5e78"/><path d="M4.5 1v7M6.500 1v7" stroke="#a0a4b8"/><rect x="9.5" y="1.500" width="6" height="6" rx="1" fill="#fff" stroke="#5a5e78"/><rect x="11" y="4" width="3" height="2" fill="#4a4e66"/></svg>
<i style="left:517px;top:15px;width:10px;height:1px;background:#000;"></i>
<i style="left:562px;top:10px;width:8px;height:8px;border:1px solid #000;background:#fff"></i>
<svg style="left:607.5px;top:9.5px" width="11" height="11" viewBox="0 0 11 11"><path d="M0.5 0.5 10.5 10.5M10.5 0.5 0.5 10.5" stroke="#000" stroke-width="1.1"/></svg>
<span class="t" style="left:3px;top:937px;transform:scaleX(0.9336);line-height:18px;">Ready</span>
<i class="pane" style="left:517px;top:937px;width:27px;height:15px"></i>
<i class="pane" style="left:548px;top:937px;width:32px;height:15px"></i>
<i class="pane" style="left:584px;top:937px;width:31px;height:15px"></i>
<span class="t" style="left:551px;top:937px;transform:scaleX(1.0369);line-height:18px;">NUM</span>
<svg style="left:622px;top:941px" width="13" height="13" viewBox="0 0 13 13"><path d="M1 12 12 1M5 12 12 5M9 12 12 9" stroke="#a0a0a0" stroke-width="1"/></svg>
</div>
<i style="left:0px;top:0px;width:634px;height:1px;background:#1883d7;"></i>
<i style="left:0px;top:0px;width:1px;height:954px;background:#1883d7;"></i>
<i style="left:0px;top:954px;width:634px;height:1px;background:#fff;"></i>
</div>
<div class="win" style="left:642px;top:0;width:629px;height:955px;background:#fff">
<div class="in" style="left:-4px">
<i style="left:98px;top:72px;width:519px;height:18px;background:#f0f0f0;"></i>
<i style="left:98px;top:108px;width:519px;height:18px;background:#f0f0f0;"></i>
<i style="left:98px;top:162px;width:519px;height:18px;background:#f0f0f0;"></i>
<i style="left:98px;top:198px;width:519px;height:18px;background:#f0f0f0;"></i>
<i style="left:98px;top:252px;width:519px;height:18px;background:#f0f0f0;"></i>
<i style="left:98px;top:288px;width:519px;height:18px;background:#f0f0f0;"></i>
<i style="left:98px;top:324px;width:519px;height:18px;background:#f0f0f0;"></i>
<i style="left:98px;top:378px;width:519px;height:18px;background:#f0f0f0;"></i>
<i style="left:98px;top:432px;width:519px;height:18px;background:#f0f0f0;"></i>
<i style="left:98px;top:468px;width:519px;height:18px;background:#f0f0f0;"></i>
<i style="left:98px;top:522px;width:519px;height:18px;background:#f0f0f0;"></i>
<i style="left:98px;top:576px;width:519px;height:18px;background:#f0f0f0;"></i>
<i style="left:98px;top:648px;width:519px;height:18px;background:#f0f0f0;"></i>
<i style="left:98px;top:684px;width:519px;height:18px;background:#f0f0f0;"></i>
<i style="left:98px;top:738px;width:519px;height:18px;background:#f0f0f0;"></i>
<i style="left:98px;top:774px;width:519px;height:18px;background:#f0f0f0;"></i>
<i style="left:98px;top:810px;width:519px;height:18px;background:#f0f0f0;"></i>
<i style="left:98px;top:846px;width:519px;height:18px;background:#f0f0f0;"></i>
<i style="left:98px;top:900px;width:519px;height:18px;background:#f0f0f0;"></i>
<i class="vd" style="left:30px;top:72px;height:18px;background-position:0 0px"></i>
<i class="vd" style="left:49px;top:72px;height:18px;background-position:0 0px"></i>
<i class="vd" style="left:68px;top:72px;height:18px;background-position:0 0px"></i>
<i class="hd" style="left:68px;top:82px;width:11px;background-position:0px 0"></i>
<span class="t" style="left:100px;top:72px;transform:scaleX(0.9535);">Package</span>
<span class="t" style="left:239px;top:72px;transform:scaleX(0.9285);">41.68 W</span>
<span class="t" style="left:326px;top:72px;transform:scaleX(0.9285);">12.73 W</span>
<span class="t" style="left:413px;top:72px;transform:scaleX(0.9285);">42.71 W</span>
<i class="vd" style="left:30px;top:90px;height:18px;background-position:0 0px"></i>
<i class="vd" style="left:49px;top:90px;height:18px;background-position:0 0px"></i>
<i class="vd" style="left:68px;top:90px;height:18px;background-position:0 0px"></i>
<i class="hd" style="left:68px;top:100px;width:11px;background-position:0px 0"></i>
<span class="t" style="left:100px;top:90px;transform:scaleX(0.9456);">IA Cores</span>
<span class="t" style="left:239px;top:90px;transform:scaleX(0.9285);">32.71 W</span>
<span class="t" style="left:326px;top:90px;transform:scaleX(0.9317);">2.75 W</span>
<span class="t" style="left:413px;top:90px;transform:scaleX(0.9285);">33.85 W</span>
<i class="vd" style="left:30px;top:108px;height:18px;background-position:0 0px"></i>
<i class="vd" style="left:49px;top:108px;height:18px;background-position:0 0px"></i>
<i class="vd" style="left:68px;top:108px;height:18px;background-position:0 0px"></i>
<i class="hd" style="left:68px;top:118px;width:11px;background-position:0px 0"></i>
<span class="t" style="left:100px;top:108px;transform:scaleX(0.9941);">Uncore</span>
<span class="t" style="left:239px;top:108px;transform:scaleX(0.9317);">8.98 W</span>
<span class="t" style="left:326px;top:108px;transform:scaleX(0.9317);">8.73 W</span>
<span class="t" style="left:413px;top:108px;transform:scaleX(0.9285);">13.91 W</span>
<i class="vd" style="left:30px;top:126px;height:18px;background-position:0 0px"></i>
<i class="vd" style="left:49px;top:126px;height:18px;background-position:0 0px"></i>
<i class="vd" style="left:68px;top:126px;height:11px;background-position:0 0px"></i>
<i class="hd" style="left:68px;top:136px;width:11px;background-position:0px 0"></i>
<span class="t" style="left:100px;top:126px;transform:scaleX(0.9738);">DRAM</span>
<span class="t" style="left:239px;top:126px;transform:scaleX(0.9317);">3.95 W</span>
<span class="t" style="left:326px;top:126px;transform:scaleX(0.9317);">2.52 W</span>
<span class="t" style="left:413px;top:126px;transform:scaleX(0.9317);">5.26 W</span>
<i class="vd" style="left:30px;top:144px;height:18px;background-position:0 0px"></i>
<i class="vd" style="left:49px;top:144px;height:6px;background-position:0 0px"></i>
<i class="vd" style="left:49px;top:159px;height:3px;background-position:0 1px"></i>
<i class="hd" style="left:55px;top:154px;width:5px;background-position:0px 0"></i>
<i class="xb" style="left:45px;top:150px"><b></b></i>
<svg style="left:60px;top:145px" width="16" height="16" viewBox="0 0 16 16"><g shape-rendering="crispEdges"><rect x="0" y="0" width="16" height="16" fill="#b8b8b8"/><rect x="0" y="0" width="15" height="15" fill="#f4f4f4"/><rect x="1" y="1" width="14" height="14" fill="#dadada"/><rect x="1" y="13" width="14" height="2" fill="#cfcfcf"/></g><path d="M3.4 10.5h2V5.6h3v4.9h2.6V5.4" fill="none" stroke="#34349c" stroke-width="1.3"/></svg>
<span class="t" style="left:81px;top:144px;transform:scaleX(0.9557);">Clocks</span>
<i class="vd" style="left:30px;top:162px;height:18px;background-position:0 0px"></i>
<i class="vd" style="left:49px;top:162px;height:18px;background-position:0 0px"></i>
<i class="vd" style="left:68px;top:162px;height:18px;background-position:0 0px"></i>
<i class="hd" style="left:68px;top:172px;width:11px;background-position:0px 0"></i>
<span class="t" style="left:100px;top:162px;transform:scaleX(0.9482);">Core #0</span>
<span class="t" style="left:239px;top:162px;transform:scaleX(0.9622);">3099 MHz</span>
<span class="t" style="left:326px;top:162px;transform:scaleX(0.9622);">2975 MHz</span>
<span class="t" style="left:413px;top:162px;transform:scaleX(0.9622);">3512 MHz</span>
<i class="vd" style="left:30px;top:180px;height:18px;background-position:0 0px"></i>
<i class="vd" style="left:49px;top:180px;height:18px;background-position:0 0px"></i>
<i class="vd" style="left:68px;top:180px;height:18px;background-position:0 0px"></i>
<i class="hd" style="left:68px;top:190px;width:11px;background-position:0px 0"></i>
<span class="t" style="left:100px;top:180px;transform:scaleX(0.9482);">Core #1</span>
<span class="t" style="left:239px;top:180px;transform:scaleX(0.9622);">3099 MHz</span>
<span class="t" style="left:326px;top:180px;transform:scaleX(0.9622);">2970 MHz</span>
<span class="t" style="left:413px;top:180px;transform:scaleX(0.9622);">3512 MHz</span>
<i class="vd" style="left:30px;top:198px;height:18px;background-position:0 0px"></i>
<i class="vd" style="left:49px;top:198px;height:18px;background-position:0 0px"></i>
<i class="vd" style="left:68px;top:198px;height:18px;background-position:0 0px"></i>
<i class="hd" style="left:68px;top:208px;width:11px;background-position:0px 0"></i>
<span class="t" style="left:100px;top:198px;transform:scaleX(0.9482);">Core #2</span>
<span class="t" style="left:239px;top:198px;transform:scaleX(0.9622);">3099 MHz</span>
<span class="t" style="left:326px;top:198px;transform:scaleX(0.9622);">2975 MHz</span>
<span class="t" style="left:413px;top:198px;transform:scaleX(0.9622);">3512 MHz</span>
<i class="vd" style="left:30px;top:216px;height:18px;background-position:0 0px"></i>
<i class="vd" style="left:49px;top:216px;height:18px;background-position:0 0px"></i>
<i class="vd" style="left:68px;top:216px;height:11px;background-position:0 0px"></i>
<i class="hd" style="left:68px;top:226px;width:11px;background-position:0px 0"></i>
<span class="t" style="left:100px;top:216px;transform:scaleX(0.9482);">Core #3</span>
<span class="t" style="left:239px;top:216px;transform:scaleX(0.9622);">3099 MHz</span>
<span class="t" style="left:326px;top:216px;transform:scaleX(0.9622);">3002 MHz</span>
<span class="t" style="left:413px;top:216px;transform:scaleX(0.9622);">3512 MHz</span>
<i class="vd" style="left:30px;top:234px;height:18px;background-position:0 0px"></i>
<i class="vd" style="left:49px;top:234px;height:6px;background-position:0 0px"></i>
<i class="hd" style="left:55px;top:244px;width:5px;background-position:0px 0"></i>
<i class="xb" style="left:45px;top:240px"><b></b></i>
<svg style="left:60px;top:235px" width="16" height="16" viewBox="0 0 16 16"><g shape-rendering="crispEdges"><rect x="0" y="3" width="16" height="12" fill="#9c9c9c"/><rect x="1" y="3" width="14" height="11" fill="#0a120a"/></g><path d="M1.4 10.2 2.8 11.4 4.4 7 5.6 10 7.2 10.8 8.8 6 9.8 10.4 11.2 12 12.2 9.6 13.4 12.8 14 8.4 14.8 9.6" fill="none" stroke="#18c43c" stroke-width="1.15"/></svg>
<span class="t" style="left:81px;top:234px;transform:scaleX(1.0311);">Utilization</span>
<i class="vd" style="left:30px;top:252px;height:18px;background-position:0 0px"></i>
<i class="vd" style="left:68px;top:252px;height:18px;background-position:0 0px"></i>
<i class="hd" style="left:68px;top:262px;width:11px;background-position:0px 0"></i>
<span class="t" style="left:100px;top:252px;transform:scaleX(0.8759);">UC</span>
<span class="t" style="left:239px;top:252px;transform:scaleX(0.9220);">100 %</span>
<span class="t" style="left:326px;top:252px;transform:scaleX(0.9299);">1 %</span>
<span class="t" style="left:413px;top:252px;transform:scaleX(0.9220);">100 %</span>
<i class="vd" style="left:30px;top:270px;height:18px;background-position:0 0px"></i>
<i class="vd" style="left:68px;top:270px;height:18px;background-position:0 0px"></i>
<i class="hd" style="left:68px;top:280px;width:11px;background-position:0px 0"></i>
<span class="t" style="left:100px;top:270px;transform:scaleX(0.9152);">CPU #0</span>
<span class="t" style="left:239px;top:270px;transform:scaleX(0.9220);">100 %</span>
<span class="t" style="left:326px;top:270px;transform:scaleX(0.9299);">0 %</span>
<span class="t" style="left:413px;top:270px;transform:scaleX(0.9220);">100 %</span>
<i class="vd" style="left:30px;top:288px;height:18px;background-position:0 0px"></i>
<i class="vd" style="left:68px;top:288px;height:18px;background-position:0 0px"></i>
<i class="hd" style="left:68px;top:298px;width:11px;background-position:0px 0"></i>
<span class="t" style="left:100px;top:288px;transform:scaleX(0.9152);">CPU #2</span>
<span class="t" style="left:239px;top:288px;transform:scaleX(0.9220);">100 %</span>
<span class="t" style="left:326px;top:288px;transform:scaleX(0.9299);">0 %</span>
<span class="t" style="left:413px;top:288px;transform:scaleX(0.9220);">100 %</span>
<i class="vd" style="left:30px;top:306px;height:18px;background-position:0 0px"></i>
<i class="vd" style="left:68px;top:306px;height:18px;background-position:0 0px"></i>
<i class="hd" style="left:68px;top:316px;width:11px;background-position:0px 0"></i>
<span class="t" style="left:100px;top:306px;transform:scaleX(0.9152);">CPU #4</span>
<span class="t" style="left:239px;top:306px;transform:scaleX(0.9220);">100 %</span>
<span class="t" style="left:326px;top:306px;transform:scaleX(0.9299);">0 %</span>
<span class="t" style="left:413px;top:306px;transform:scaleX(0.9220);">100 %</span>
<i class="vd" style="left:30px;top:324px;height:18px;background-position:0 0px"></i>
<i class="vd" style="left:68px;top:324px;height:11px;background-position:0 0px"></i>
<i class="hd" style="left:68px;top:334px;width:11px;background-position:0px 0"></i>
<span class="t" style="left:100px;top:324px;transform:scaleX(0.9152);">CPU #6</span>
<span class="t" style="left:239px;top:324px;transform:scaleX(0.9220);">100 %</span>
<span class="t" style="left:326px;top:324px;transform:scaleX(0.9299);">0 %</span>
<span class="t" style="left:413px;top:324px;transform:scaleX(0.9220);">100 %</span>
<i class="vd" style="left:30px;top:342px;height:6px;background-position:0 0px"></i>
<i class="vd" style="left:30px;top:357px;height:3px;background-position:0 1px"></i>
<i class="hd" style="left:36px;top:352px;width:5px;background-position:0px 0"></i>
<i class="xb" style="left:26px;top:348px"><b></b></i>
<svg style="left:41px;top:344px" width="16" height="16" viewBox="0 0 16 16"><path d="M0.6 6.2 7.2 1.6 15.4 5.6 15.4 8.2 8.8 13.2 0.6 8.6z" fill="#dcdcdc" stroke="#2a2a2a" stroke-width="1" stroke-linejoin="round"/><path d="M0.6 6.2 8.8 10.6 15.4 5.6" fill="none" stroke="#2a2a2a" stroke-width="1"/><path d="M8.8 10.6v2.6" stroke="#2a2a2a" stroke-width="1"/><path d="M2.6 6.2 7.2 3 13.2 5.8 8.8 9.2z" fill="#c8c8c8"/><circle cx="7.8" cy="5.8" r="1.3" fill="#b4b4a4"/><path d="M9.4 11 14.8 7v1.2L9.4 12.4z" fill="#f8f8f8"/><path d="M1.2 7.2 8.2 11v1.4L1.2 8.4z" fill="#bdbdbd"/></svg>
<span class="t" style="left:62px;top:342px;transform:scaleX(0.9276);">ST2000DM001-1CH164</span>
<i class="vd" style="left:30px;top:360px;height:18px;background-position:0 0px"></i>
<i class="vd" style="left:49px;top:360px;height:6px;background-position:0 0px"></i>
<i class="vd" style="left:49px;top:375px;height:3px;background-position:0 1px"></i>
<i class="hd" style="left:55px;top:370px;width:5px;background-position:0px 0"></i>
<i class="xb" style="left:45px;top:366px"><b></b></i>
<svg style="left:60px;top:360px" width="16" height="16" viewBox="0 0 16 16"><path d="M6 10.600 14.200 2" stroke="#c0c2c6" stroke-width="3" stroke-linecap="round"/><path d="M6.2 11.2 8 12.4" stroke="#909090" stroke-width="1.6" stroke-linecap="round" opacity=".6"/><path d="M5.6 10.400 10.4 5.400" stroke="#f00c1c" stroke-width="1.300" stroke-linecap="round"/><circle cx="5" cy="12.4" r="3.5" fill="#8c8c8c" opacity=".55"/><circle cx="4.3" cy="11.9" r="3.5" fill="#f01020"/><circle cx="3.5" cy="11.2" r="1.1" fill="#ffb8b8"/></svg>
<span class="t" style="left:81px;top:360px;transform:scaleX(0.9794);">Temperatures</span>
<i class="vd" style="left:30px;top:378px;height:18px;background-position:0 0px"></i>
<i class="vd" style="left:49px;top:378px;height:18px;background-position:0 0px"></i>
<i class="vd" style="left:68px;top:378px;height:18px;background-position:0 0px"></i>
<i class="hd" style="left:68px;top:388px;width:11px;background-position:0px 0"></i>
<span class="t" style="left:100px;top:378px;transform:scaleX(0.9728);">Assembly</span>
<span class="t" style="left:239px;top:378px;transform:scaleX(0.9210);">29 °C  (84 °F)</span>
<span class="t" style="left:326px;top:378px;transform:scaleX(0.9210);">27 °C  (80 °F)</span>
<span class="t" style="left:413px;top:378px;transform:scaleX(0.9210);">29 °C  (84 °F)</span>
<i class="vd" style="left:30px;top:396px;height:18px;background-position:0 0px"></i>
<i class="vd" style="left:49px;top:396px;height:18px;background-position:0 0px"></i>
<i class="vd" style="left:68px;top:396px;height:11px;background-position:0 0px"></i>
<i class="hd" style="left:68px;top:406px;width:11px;background-position:0px 0"></i>
<span class="t" style="left:100px;top:396px;transform:scaleX(1.0042);">Air Flow</span>
<span class="t" style="left:239px;top:396px;transform:scaleX(0.9210);">29 °C  (84 °F)</span>
<span class="t" style="left:326px;top:396px;transform:scaleX(0.9210);">27 °C  (80 °F)</span>
<span class="t" style="left:413px;top:396px;transform:scaleX(0.9210);">29 °C  (84 °F)</span>
<i class="vd" style="left:30px;top:414px;height:18px;background-position:0 0px"></i>
<i class="vd" style="left:49px;top:414px;height:6px;background-position:0 0px"></i>
<i class="hd" style="left:55px;top:424px;width:5px;background-position:0px 0"></i>
<i class="xb" style="left:45px;top:420px"><b></b></i>
<svg style="left:60px;top:415px" width="16" height="16" viewBox="0 0 16 16"><g shape-rendering="crispEdges"><rect x="0" y="3" width="16" height="12" fill="#9c9c9c"/><rect x="1" y="3" width="14" height="11" fill="#0a120a"/></g><path d="M1.4 10.2 2.8 11.4 4.4 7 5.6 10 7.2 10.8 8.8 6 9.8 10.4 11.2 12 12.2 9.6 13.4 12.8 14 8.4 14.8 9.6" fill="none" stroke="#18c43c" stroke-width="1.15"/></svg>
<span class="t" style="left:81px;top:414px;transform:scaleX(1.0311);">Utilization</span>
<i class="vd" style="left:30px;top:432px;height:18px;background-position:0 0px"></i>
<i class="vd" style="left:68px;top:432px;height:18px;background-position:0 0px"></i>
<i class="hd" style="left:68px;top:442px;width:11px;background-position:0px 0"></i>
<span class="t" style="left:100px;top:432px;transform:scaleX(0.9532);">Space (f:)</span>
<span class="t" style="left:239px;top:432px;transform:scaleX(0.9250);">90 %</span>
<span class="t" style="left:326px;top:432px;transform:scaleX(0.9250);">90 %</span>
<span class="t" style="left:413px;top:432px;transform:scaleX(0.9250);">90 %</span>
<i class="vd" style="left:30px;top:450px;height:18px;background-position:0 0px"></i>
<i class="vd" style="left:68px;top:450px;height:18px;background-position:0 0px"></i>
<i class="hd" style="left:68px;top:460px;width:11px;background-position:0px 0"></i>
<span class="t" style="left:100px;top:450px;transform:scaleX(0.9506);">Space (g:)</span>
<span class="t" style="left:239px;top:450px;transform:scaleX(0.9250);">32 %</span>
<span class="t" style="left:326px;top:450px;transform:scaleX(0.9250);">32 %</span>
<span class="t" style="left:413px;top:450px;transform:scaleX(0.9250);">32 %</span>
<i class="vd" style="left:30px;top:468px;height:18px;background-position:0 0px"></i>
<i class="vd" style="left:68px;top:468px;height:11px;background-position:0 0px"></i>
<i class="hd" style="left:68px;top:478px;width:11px;background-position:0px 0"></i>
<span class="t" style="left:100px;top:468px;transform:scaleX(0.9506);">Space (h:)</span>
<span class="t" style="left:239px;top:468px;transform:scaleX(0.9250);">61 %</span>
<span class="t" style="left:326px;top:468px;transform:scaleX(0.9250);">61 %</span>
<span class="t" style="left:413px;top:468px;transform:scaleX(0.9250);">61 %</span>
<i class="vd" style="left:30px;top:486px;height:6px;background-position:0 0px"></i>
<i class="vd" style="left:30px;top:501px;height:3px;background-position:0 1px"></i>
<i class="hd" style="left:36px;top:496px;width:5px;background-position:0px 0"></i>
<i class="xb" style="left:26px;top:492px"><b></b></i>
<svg style="left:41px;top:488px" width="16" height="16" viewBox="0 0 16 16"><path d="M0.6 6.2 7.2 1.6 15.4 5.6 15.4 8.2 8.8 13.2 0.6 8.6z" fill="#dcdcdc" stroke="#2a2a2a" stroke-width="1" stroke-linejoin="round"/><path d="M0.6 6.2 8.8 10.6 15.4 5.6" fill="none" stroke="#2a2a2a" stroke-width="1"/><path d="M8.8 10.6v2.6" stroke="#2a2a2a" stroke-width="1"/><path d="M2.6 6.2 7.2 3 13.2 5.8 8.8 9.2z" fill="#c8c8c8"/><circle cx="7.8" cy="5.8" r="1.3" fill="#b4b4a4"/><path d="M9.4 11 14.8 7v1.2L9.4 12.4z" fill="#f8f8f8"/><path d="M1.2 7.2 8.2 11v1.4L1.2 8.4z" fill="#bdbdbd"/></svg>
<span class="t" style="left:62px;top:486px;transform:scaleX(0.8816);">ST3500418AS</span>
<i class="vd" style="left:30px;top:504px;height:18px;background-position:0 0px"></i>
<i class="vd" style="left:49px;top:504px;height:6px;background-position:0 0px"></i>
<i class="vd" style="left:49px;top:519px;height:3px;background-position:0 1px"></i>
<i class="hd" style="left:55px;top:514px;width:5px;background-position:0px 0"></i>
<i class="xb" style="left:45px;top:510px"><b></b></i>
<svg style="left:60px;top:504px" width="16" height="16" viewBox="0 0 16 16"><path d="M6 10.600 14.200 2" stroke="#c0c2c6" stroke-width="3" stroke-linecap="round"/><path d="M6.2 11.2 8 12.4" stroke="#909090" stroke-width="1.6" stroke-linecap="round" opacity=".6"/><path d="M5.6 10.400 10.4 5.400" stroke="#f00c1c" stroke-width="1.300" stroke-linecap="round"/><circle cx="5" cy="12.4" r="3.5" fill="#8c8c8c" opacity=".55"/><circle cx="4.3" cy="11.9" r="3.5" fill="#f01020"/><circle cx="3.5" cy="11.2" r="1.1" fill="#ffb8b8"/></svg>
<span class="t" style="left:81px;top:504px;transform:scaleX(0.9794);">Temperatures</span>
<i class="vd" style="left:30px;top:522px;height:18px;background-position:0 0px"></i>
<i class="vd" style="left:49px;top:522px;height:18px;background-position:0 0px"></i>
<i class="vd" style="left:68px;top:522px;height:18px;background-position:0 0px"></i>
<i class="hd" style="left:68px;top:532px;width:11px;background-position:0px 0"></i>
<span class="t" style="left:100px;top:522px;transform:scaleX(0.9728);">Assembly</span>
<span class="t" style="left:239px;top:522px;transform:scaleX(0.9210);">28 °C  (82 °F)</span>
<span class="t" style="left:326px;top:522px;transform:scaleX(0.9210);">24 °C  (75 °F)</span>
<span class="t" style="left:413px;top:522px;transform:scaleX(0.9210);">28 °C  (82 °F)</span>
<i class="vd" style="left:30px;top:540px;height:18px;background-position:0 0px"></i>
<i class="vd" style="left:49px;top:540px;height:18px;background-position:0 0px"></i>
<i class="vd" style="left:68px;top:540px;height:11px;background-position:0 0px"></i>
<i class="hd" style="left:68px;top:550px;width:11px;background-position:0px 0"></i>
<span class="t" style="left:100px;top:540px;transform:scaleX(1.0042);">Air Flow</span>
<span class="t" style="left:239px;top:540px;transform:scaleX(0.9210);">28 °C  (82 °F)</span>
<span class="t" style="left:326px;top:540px;transform:scaleX(0.9210);">24 °C  (75 °F)</span>
<span class="t" style="left:413px;top:540px;transform:scaleX(0.9210);">28 °C  (82 °F)</span>
<i class="vd" style="left:30px;top:558px;height:18px;background-position:0 0px"></i>
<i class="vd" style="left:49px;top:558px;height:6px;background-position:0 0px"></i>
<i class="hd" style="left:55px;top:568px;width:5px;background-position:0px 0"></i>
<i class="xb" style="left:45px;top:564px"><b></b></i>
<svg style="left:60px;top:559px" width="16" height="16" viewBox="0 0 16 16"><g shape-rendering="crispEdges"><rect x="0" y="3" width="16" height="12" fill="#9c9c9c"/><rect x="1" y="3" width="14" height="11" fill="#0a120a"/></g><path d="M1.4 10.2 2.8 11.4 4.4 7 5.6 10 7.2 10.8 8.8 6 9.8 10.4 11.2 12 12.2 9.6 13.4 12.8 14 8.4 14.8 9.6" fill="none" stroke="#18c43c" stroke-width="1.15"/></svg>
<span class="t" style="left:81px;top:558px;transform:scaleX(1.0311);">Utilization</span>
<i class="vd" style="left:30px;top:576px;height:18px;background-position:0 0px"></i>
<i class="vd" style="left:68px;top:576px;height:18px;background-position:0 0px"></i>
<i class="hd" style="left:68px;top:586px;width:11px;background-position:0px 0"></i>
<span class="t" style="left:100px;top:576px;transform:scaleX(0.9459);">Space (i:)</span>
<span class="t" style="left:239px;top:576px;transform:scaleX(0.9250);">82 %</span>
<span class="t" style="left:326px;top:576px;transform:scaleX(0.9250);">82 %</span>
<span class="t" style="left:413px;top:576px;transform:scaleX(0.9250);">82 %</span>
<i class="vd" style="left:30px;top:594px;height:18px;background-position:0 0px"></i>
<i class="vd" style="left:68px;top:594px;height:11px;background-position:0 0px"></i>
<i class="hd" style="left:68px;top:604px;width:11px;background-position:0px 0"></i>
<span class="t" style="left:100px;top:594px;transform:scaleX(0.9459);">Space (j:)</span>
<span class="t" style="left:239px;top:594px;transform:scaleX(0.9250);">99 %</span>
<span class="t" style="left:326px;top:594px;transform:scaleX(0.9250);">99 %</span>
<span class="t" style="left:413px;top:594px;transform:scaleX(0.9250);">99 %</span>
<i class="vd" style="left:30px;top:612px;height:6px;background-position:0 0px"></i>
<i class="vd" style="left:30px;top:627px;height:3px;background-position:0 1px"></i>
<i class="hd" style="left:36px;top:622px;width:5px;background-position:0px 0"></i>
<i class="xb" style="left:26px;top:618px"><b></b></i>
<svg style="left:41px;top:614px" width="16" height="16" viewBox="0 0 16 16"><path d="M0.6 6.2 7.2 1.6 15.4 5.6 15.4 8.2 8.8 13.2 0.6 8.6z" fill="#dcdcdc" stroke="#2a2a2a" stroke-width="1" stroke-linejoin="round"/><path d="M0.6 6.2 8.8 10.6 15.4 5.6" fill="none" stroke="#2a2a2a" stroke-width="1"/><path d="M8.8 10.6v2.6" stroke="#2a2a2a" stroke-width="1"/><path d="M2.6 6.2 7.2 3 13.2 5.8 8.8 9.2z" fill="#c8c8c8"/><circle cx="7.8" cy="5.8" r="1.3" fill="#b4b4a4"/><path d="M9.4 11 14.8 7v1.2L9.4 12.4z" fill="#f8f8f8"/><path d="M1.2 7.2 8.2 11v1.4L1.2 8.4z" fill="#bdbdbd"/></svg>
<span class="t" style="left:62px;top:612px;transform:scaleX(0.9032);">Samsung SSD 850 EVO 250GB</span>
<i class="vd" style="left:30px;top:630px;height:18px;background-position:0 0px"></i>
<i class="vd" style="left:49px;top:630px;height:6px;background-position:0 0px"></i>
<i class="vd" style="left:49px;top:645px;height:3px;background-position:0 1px"></i>
<i class="hd" style="left:55px;top:640px;width:5px;background-position:0px 0"></i>
<i class="xb" style="left:45px;top:636px"><b></b></i>
<svg style="left:60px;top:630px" width="16" height="16" viewBox="0 0 16 16"><path d="M6 10.600 14.200 2" stroke="#c0c2c6" stroke-width="3" stroke-linecap="round"/><path d="M6.2 11.2 8 12.4" stroke="#909090" stroke-width="1.6" stroke-linecap="round" opacity=".6"/><path d="M5.6 10.400 10.4 5.400" stroke="#f00c1c" stroke-width="1.300" stroke-linecap="round"/><circle cx="5" cy="12.4" r="3.5" fill="#8c8c8c" opacity=".55"/><circle cx="4.3" cy="11.9" r="3.5" fill="#f01020"/><circle cx="3.5" cy="11.2" r="1.1" fill="#ffb8b8"/></svg>
<span class="t" style="left:81px;top:630px;transform:scaleX(0.9794);">Temperatures</span>
<i class="vd" style="left:30px;top:648px;height:18px;background-position:0 0px"></i>
<i class="vd" style="left:49px;top:648px;height:18px;background-position:0 0px"></i>
<i class="vd" style="left:68px;top:648px;height:11px;background-position:0 0px"></i>
<i class="hd" style="left:68px;top:658px;width:11px;background-position:0px 0"></i>
<span class="t" style="left:100px;top:648px;transform:scaleX(1.0042);">Air Flow</span>
<span class="t" style="left:239px;top:648px;transform:scaleX(0.9210);">33 °C  (91 °F)</span>
<span class="t" style="left:326px;top:648px;transform:scaleX(0.9210);">32 °C  (89 °F)</span>
<span class="t" style="left:413px;top:648px;transform:scaleX(0.9210);">33 °C  (91 °F)</span>
<i class="vd" style="left:30px;top:666px;height:18px;background-position:0 0px"></i>
<i class="vd" style="left:49px;top:666px;height:6px;background-position:0 0px"></i>
<i class="hd" style="left:55px;top:676px;width:5px;background-position:0px 0"></i>
<i class="xb" style="left:45px;top:672px"><b></b></i>
<svg style="left:60px;top:667px" width="16" height="16" viewBox="0 0 16 16"><g shape-rendering="crispEdges"><rect x="0" y="3" width="16" height="12" fill="#9c9c9c"/><rect x="1" y="3" width="14" height="11" fill="#0a120a"/></g><path d="M1.4 10.2 2.8 11.4 4.4 7 5.6 10 7.2 10.8 8.8 6 9.8 10.4 11.2 12 12.2 9.6 13.4 12.8 14 8.4 14.8 9.6" fill="none" stroke="#18c43c" stroke-width="1.15"/></svg>
<span class="t" style="left:81px;top:666px;transform:scaleX(1.0311);">Utilization</span>
<i class="vd" style="left:30px;top:684px;height:18px;background-position:0 0px"></i>
<i class="vd" style="left:68px;top:684px;height:11px;background-position:0 0px"></i>
<i class="hd" style="left:68px;top:694px;width:11px;background-position:0px 0"></i>
<span class="t" style="left:100px;top:684px;transform:scaleX(0.9438);">Space (c:)</span>
<span class="t" style="left:239px;top:684px;transform:scaleX(0.9250);">65 %</span>
<span class="t" style="left:326px;top:684px;transform:scaleX(0.9250);">65 %</span>
<span class="t" style="left:413px;top:684px;transform:scaleX(0.9250);">65 %</span>
<i class="vd" style="left:30px;top:702px;height:6px;background-position:0 0px"></i>
<i class="hd" style="left:36px;top:712px;width:5px;background-position:0px 0"></i>
<i class="xb" style="left:26px;top:708px"><b></b></i>
<svg style="left:41px;top:703px" width="16" height="17" viewBox="0 0 16 17"><g shape-rendering="crispEdges"><rect x="0" y="3" width="13" height="10" fill="#141414"/><rect x="1" y="4" width="11" height="8" fill="#10a428"/><rect x="5" y="13" width="8" height="3" fill="#141414"/><rect x="6" y="13" width="6" height="2" fill="#f4d400"/><rect x="12" y="2" width="1" height="14" fill="#141414"/><rect x="13" y="2" width="2" height="14" fill="#d0d0d0"/><rect x="15" y="3" width="1" height="13" fill="#141414"/><rect x="12" y="1" width="4" height="1" fill="#141414"/><rect x="12" y="16" width="3" height="1" fill="#141414"/><rect x="1" y="5" width="3" height="6" fill="#b4b4b4"/><rect x="2" y="6" width="1" height="4" fill="#787878"/><rect x="8" y="4" width="4" height="4" fill="#1450e0"/><rect x="9" y="5" width="2" height="1" fill="#e4c890"/><rect x="15" y="6" width="1" height="3" fill="#1450e0"/><rect x="6" y="4" width="1" height="1" fill="#fff"/><rect x="6" y="7" width="1" height="1" fill="#fff"/><rect x="5" y="10" width="1" height="1" fill="#fff"/><rect x="8" y="10" width="1" height="1" fill="#fff"/><rect x="4" y="5" width="1" height="1" fill="#60f060"/><rect x="7" y="6" width="1" height="1" fill="#60f060"/><rect x="10" y="9" width="1" height="1" fill="#60f060"/><rect x="4" y="8" width="1" height="1" fill="#60f060"/><rect x="7" y="11" width="1" height="1" fill="#0a7018"/><rect x="10" y="11" width="1" height="1" fill="#0a7018"/></g></svg>
<span class="t" style="left:62px;top:702px;transform:scaleX(0.9484);">Radeon (TM) RX 480 Graphics</span>
<i class="vd" style="left:49px;top:720px;height:6px;background-position:0 0px"></i>
<i class="vd" style="left:49px;top:735px;height:3px;background-position:0 1px"></i>
<i class="hd" style="left:55px;top:730px;width:5px;background-position:0px 0"></i>
<i class="xb" style="left:45px;top:726px"><b></b></i>
<svg style="left:60px;top:721px" width="16" height="16" viewBox="0 0 16 16"><defs><radialGradient id="vg" gradientUnits="userSpaceOnUse" cx="9.2" cy="7.4" r="6"><stop offset="0" stop-color="#fffbe0"/><stop offset=".3" stop-color="#ffd820"/><stop offset=".7" stop-color="#f0a000"/><stop offset="1" stop-color="#e08800"/></radialGradient></defs><path d="M0.2 11.5 7.6 3.3 9.7 6.3 15.9 4.1 8.6 12 6.8 8.7z" fill="url(#vg)" stroke="#4a4410" stroke-width="0.8" stroke-linejoin="round" stroke-opacity=".85"/></svg>
<span class="t" style="left:81px;top:720px;transform:scaleX(0.9892);">Voltages</span>
<i class="vd" style="left:49px;top:738px;height:18px;background-position:0 0px"></i>
<i class="vd" style="left:68px;top:738px;height:11px;background-position:0 0px"></i>
<i class="hd" style="left:68px;top:748px;width:11px;background-position:0px 0"></i>
<span class="t" style="left:100px;top:738px;transform:scaleX(0.9483);">VIN0</span>
<span class="t" style="left:239px;top:738px;transform:scaleX(0.9073);">846061.750 V</span>
<span class="t" style="left:326px;top:738px;transform:scaleX(0.9052);">0.014 V</span>
<span class="t" style="left:413px;top:738px;transform:scaleX(0.9075);">1504641.000 V</span>
<i class="vd" style="left:49px;top:756px;height:6px;background-position:0 0px"></i>
<i class="vd" style="left:49px;top:771px;height:3px;background-position:0 1px"></i>
<i class="hd" style="left:55px;top:766px;width:5px;background-position:0px 0"></i>
<i class="xb" style="left:45px;top:762px"><b></b></i>
<svg style="left:60px;top:756px" width="16" height="16" viewBox="0 0 16 16"><path d="M6 10.600 14.200 2" stroke="#c0c2c6" stroke-width="3" stroke-linecap="round"/><path d="M6.2 11.2 8 12.4" stroke="#909090" stroke-width="1.6" stroke-linecap="round" opacity=".6"/><path d="M5.6 10.400 10.4 5.400" stroke="#f00c1c" stroke-width="1.300" stroke-linecap="round"/><circle cx="5" cy="12.4" r="3.5" fill="#8c8c8c" opacity=".55"/><circle cx="4.3" cy="11.9" r="3.5" fill="#f01020"/><circle cx="3.5" cy="11.2" r="1.1" fill="#ffb8b8"/></svg>
<span class="t" style="left:81px;top:756px;transform:scaleX(0.9794);">Temperatures</span>
<i class="vd" style="left:49px;top:774px;height:18px;background-position:0 0px"></i>
<i class="vd" style="left:68px;top:774px;height:11px;background-position:0 0px"></i>
<i class="hd" style="left:68px;top:784px;width:11px;background-position:0px 0"></i>
<span class="t" style="left:100px;top:774px;transform:scaleX(0.9659);">TMPIN0</span>
<span class="t" style="left:239px;top:774px;transform:scaleX(0.9201);">56 °C  (132 °F)</span>
<span class="t" style="left:326px;top:774px;transform:scaleX(0.9210);">36 °C  (96 °F)</span>
<span class="t" style="left:413px;top:774px;transform:scaleX(0.9201);">59 °C  (138 °F)</span>
<i class="vd" style="left:49px;top:792px;height:6px;background-position:0 0px"></i>
<i class="vd" style="left:49px;top:807px;height:3px;background-position:0 1px"></i>
<i class="hd" style="left:55px;top:802px;width:5px;background-position:0px 0"></i>
<i class="xb" style="left:45px;top:798px"><b></b></i>
<svg style="left:60px;top:793px" width="16" height="16" viewBox="0 0 16 16"><rect x="0" y="0" width="16" height="15" fill="#0c0c0c" shape-rendering="crispEdges"/><g fill="#dcdcdc"><path d="M2.6 2 5.4 5 4 6.2z"/><path d="M8 0.6 9 3.4 7.4 3.6z" opacity=".8"/><path d="M13.2 3 10.4 5 11.4 6.2z" opacity=".7"/><path d="M15 8.8 11.6 8.4 11.8 10.2z"/><path d="M1 8.4 4.6 8.2 4.4 10z"/><path d="M4 14 5.6 11 7 12z"/><path d="M11 13.6 9.4 11.4 10.8 10.8z" opacity=".7"/></g><circle cx="8" cy="7.2" r="3" fill="#7a838e"/><circle cx="7.4" cy="6.6" r="1.6" fill="#8c96a2"/></svg>
<span class="t" style="left:81px;top:792px;transform:scaleX(0.9105);">Fans</span>
<i class="vd" style="left:49px;top:810px;height:18px;background-position:0 0px"></i>
<i class="vd" style="left:68px;top:810px;height:11px;background-position:0 0px"></i>
<i class="hd" style="left:68px;top:820px;width:11px;background-position:0px 0"></i>
<span class="t" style="left:100px;top:810px;transform:scaleX(0.9876);">FANIN0</span>
<span class="t" style="left:239px;top:810px;transform:scaleX(0.9382);">0 RPM</span>
<span class="t" style="left:326px;top:810px;transform:scaleX(0.9382);">0 RPM</span>
<span class="t" style="left:413px;top:810px;transform:scaleX(0.9282);">2606 RPM</span>
<i class="vd" style="left:49px;top:828px;height:6px;background-position:0 0px"></i>
<i class="vd" style="left:49px;top:843px;height:3px;background-position:0 1px"></i>
<i class="hd" style="left:55px;top:838px;width:5px;background-position:0px 0"></i>
<i class="xb" style="left:45px;top:834px"><b></b></i>
<svg style="left:60px;top:829px" width="16" height="16" viewBox="0 0 16 16"><g shape-rendering="crispEdges"><rect x="0" y="0" width="16" height="16" fill="#b8b8b8"/><rect x="0" y="0" width="15" height="15" fill="#f4f4f4"/><rect x="1" y="1" width="14" height="14" fill="#dadada"/><rect x="1" y="13" width="14" height="2" fill="#cfcfcf"/></g><path d="M3.4 10.5h2V5.6h3v4.9h2.6V5.4" fill="none" stroke="#34349c" stroke-width="1.3"/></svg>
<span class="t" style="left:81px;top:828px;transform:scaleX(0.9557);">Clocks</span>
<i class="vd" style="left:49px;top:846px;height:18px;background-position:0 0px"></i>
<i class="vd" style="left:68px;top:846px;height:18px;background-position:0 0px"></i>
<i class="hd" style="left:68px;top:856px;width:11px;background-position:0px 0"></i>
<span class="t" style="left:100px;top:846px;transform:scaleX(0.9695);">Graphics</span>
<span class="t" style="left:239px;top:846px;transform:scaleX(0.9622);">1316 MHz</span>
<span class="t" style="left:326px;top:846px;transform:scaleX(0.9695);">300 MHz</span>
<span class="t" style="left:413px;top:846px;transform:scaleX(0.9622);">1316 MHz</span>
<i class="vd" style="left:49px;top:864px;height:18px;background-position:0 0px"></i>
<i class="vd" style="left:68px;top:864px;height:11px;background-position:0 0px"></i>
<i class="hd" style="left:68px;top:874px;width:11px;background-position:0px 0"></i>
<span class="t" style="left:100px;top:864px;transform:scaleX(1.0275);">Memory</span>
<span class="t" style="left:239px;top:864px;transform:scaleX(0.9695);">300 MHz</span>
<span class="t" style="left:326px;top:864px;transform:scaleX(0.9695);">300 MHz</span>
<span class="t" style="left:413px;top:864px;transform:scaleX(0.9622);">2025 MHz</span>
<i class="vd" style="left:49px;top:882px;height:6px;background-position:0 0px"></i>
<i class="hd" style="left:55px;top:892px;width:5px;background-position:0px 0"></i>
<i class="xb" style="left:45px;top:888px"><b></b></i>
<svg style="left:60px;top:883px" width="16" height="16" viewBox="0 0 16 16"><g shape-rendering="crispEdges"><rect x="0" y="3" width="16" height="12" fill="#9c9c9c"/><rect x="1" y="3" width="14" height="11" fill="#0a120a"/></g><path d="M1.4 10.2 2.8 11.4 4.4 7 5.6 10 7.2 10.8 8.8 6 9.8 10.4 11.2 12 12.2 9.6 13.4 12.8 14 8.4 14.8 9.6" fill="none" stroke="#18c43c" stroke-width="1.15"/></svg>
<span class="t" style="left:81px;top:882px;transform:scaleX(1.0311);">Utilization</span>
<i class="vd" style="left:68px;top:900px;height:11px;background-position:0 0px"></i>
<i class="hd" style="left:68px;top:910px;width:11px;background-position:0px 0"></i>
<span class="t" style="left:100px;top:900px;transform:scaleX(0.8951);">GPU</span>
<span class="t" style="left:239px;top:900px;transform:scaleX(0.9250);">37 %</span>
<span class="t" style="left:326px;top:900px;transform:scaleX(0.9299);">0 %</span>
<span class="t" style="left:413px;top:900px;transform:scaleX(0.9220);">100 %</span>
<i class="fr" style="left:60px;top:612px;width:555px;height:16px"></i>
<i style="left:0px;top:933px;width:640px;height:22px;background:#f0f0f0;"></i>
<i style="left:0px;top:933px;width:640px;height:1px;background:#e3e3e3;"></i>
<i style="left:618px;top:72px;width:15px;height:861px;background:#f0f0f0;"></i>
<i style="left:618px;top:430px;width:15px;height:486px;background:#cdcdcd;"></i>
<svg style="left:618px;top:72px" width="15" height="17" viewBox="0 0 15 17"><path d="M4 10.5 7.5 7 11 10.5" fill="none" stroke="#555" stroke-width="1.7"/></svg>
<svg style="left:618px;top:916px" width="15" height="17" viewBox="0 0 15 17"><path d="M4 6.5 7.5 10 11 6.5" fill="none" stroke="#555" stroke-width="1.7"/></svg>
<i style="left:0px;top:0px;width:640px;height:51px;background:#fff;"></i>
<i style="left:0px;top:49px;width:640px;height:2px;background:linear-gradient(#fff,#f0f0f0);"></i>
<i style="left:1px;top:51px;width:640px;height:1px;background:#a0a0a0;"></i>
<i style="left:2px;top:52px;width:640px;height:1px;background:#696969;"></i>
<i style="left:1px;top:51px;width:1px;height:882px;background:#a0a0a0;"></i>
<i style="left:2px;top:52px;width:1px;height:881px;background:#696969;"></i>
<i style="left:3px;top:53px;width:632px;height:17px;background:#f0f0f0;"></i>
<i style="left:3px;top:70px;width:632px;height:1px;background:#a0a0a0;"></i>
<i style="left:3px;top:71px;width:632px;height:1px;background:#fff;"></i>
<i style="left:231px;top:53px;width:1px;height:18px;background:#a0a0a0;"></i>
<i style="left:232px;top:53px;width:1px;height:18px;background:#fff;"></i>
<i style="left:318px;top:53px;width:1px;height:18px;background:#a0a0a0;"></i>
<i style="left:319px;top:53px;width:1px;height:18px;background:#fff;"></i>
<i style="left:405px;top:53px;width:1px;height:18px;background:#a0a0a0;"></i>
<i style="left:406px;top:53px;width:1px;height:18px;background:#fff;"></i>
<i style="left:492px;top:53px;width:1px;height:18px;background:#a0a0a0;"></i>
<i style="left:493px;top:53px;width:1px;height:18px;background:#fff;"></i>
<span class="t" style="left:8.5px;top:54px;transform:scaleX(0.9800);line-height:17px;font-size:13px;">Sensor</span>
<span class="t" style="left:238.5px;top:54px;transform:scaleX(0.9800);line-height:17px;font-size:13px;">Value</span>
<span class="t" style="left:325.5px;top:54px;transform:scaleX(0.9800);line-height:17px;font-size:13px;">Min</span>
<span class="t" style="left:412.5px;top:54px;transform:scaleX(0.9800);line-height:17px;font-size:13px;">Max</span>
<svg style="left:9px;top:7px" width="16" height="16" viewBox="0 0 16 16"><defs><linearGradient id="ag" x1="0" y1="0" x2="0" y2="1"><stop offset="0" stop-color="#be0000"/><stop offset="1" stop-color="#860404"/></linearGradient></defs><rect width="16" height="16" fill="url(#ag)"/><path d="M9.300 2 5 8.700 7.500 9 6.700 14 11.200 7.700 9 7.300z" fill="#fff"/></svg>
<span class="t" style="left:29.6px;top:7px;transform:scaleX(0.9951);line-height:19px;">CPUID HWMonitor</span>
<span class="t" style="left:8px;top:32px;transform:scaleX(0.9422);line-height:19px;">File</span>
<i style="left:8px;top:46px;width:5.072px;height:1px;background:#000;"></i>
<span class="t" style="left:40px;top:32px;transform:scaleX(0.9809);line-height:19px;">View</span>
<i style="left:40px;top:46px;width:6.084px;height:1px;background:#000;"></i>
<span class="t" style="left:78.5px;top:32px;transform:scaleX(1.0115);line-height:19px;">Tools</span>
<i style="left:78.5px;top:46px;width:5.072px;height:1px;background:#000;"></i>
<span class="t" style="left:121px;top:32px;transform:scaleX(1.0252);line-height:19px;">Help</span>
<i style="left:121px;top:46px;width:8.108px;height:1px;background:#000;"></i>
<svg style="left:472px;top:7px" width="17" height="11" viewBox="0 0 17 11"><rect x="1.5" y="0.5" width="10" height="8" fill="#fff" stroke="#5a5e78"/><path d="M4.5 1v7M6.500 1v7" stroke="#a0a4b8"/><rect x="9.5" y="1.500" width="6" height="6" rx="1" fill="#fff" stroke="#5a5e78"/><rect x="11" y="4" width="3" height="2" fill="#4a4e66"/></svg>
<i style="left:517px;top:15px;width:10px;height:1px;background:#000;"></i>
<i style="left:562px;top:10px;width:8px;height:8px;border:1px solid #000;background:#fff"></i>
<svg style="left:607.5px;top:9.5px" width="11" height="11" viewBox="0 0 11 11"><path d="M0.5 0.5 10.5 10.5M10.5 0.5 0.5 10.5" stroke="#000" stroke-width="1.1"/></svg>
<span class="t" style="left:3px;top:937px;transform:scaleX(0.9336);line-height:18px;">Ready</span>
<i class="pane" style="left:517px;top:937px;width:27px;height:15px"></i>
<i class="pane" style="left:548px;top:937px;width:32px;height:15px"></i>
<i class="pane" style="left:584px;top:937px;width:31px;height:15px"></i>
<span class="t" style="left:551px;top:937px;transform:scaleX(1.0369);line-height:18px;">NUM</span>
<svg style="left:622px;top:941px" width="13" height="13" viewBox="0 0 13 13"><path d="M1 12 12 1M5 12 12 5M9 12 12 9" stroke="#a0a0a0" stroke-width="1"/></svg>
</div>
<i style="left:0px;top:0px;width:629px;height:1px;background:#1883d7;"></i>
<i style="left:0px;top:954px;width:629px;height:1px;background:#fff;"></i>
</div>
<div class="win" style="left:1279px;top:0;width:784px;height:955px;background:#000">
<div class="in" style="left:-1279px">
<i style="left:1279px;top:0px;width:784px;height:51px;background:#fff;"></i>
<i style="left:1279px;top:49px;width:784px;height:2px;background:linear-gradient(#fff,#f0f0f0);"></i>
<svg style="left:1286px;top:7px" width="16" height="16" viewBox="0 0 16 16"><circle cx="8" cy="8" r="8" fill="#12a5cf"/><circle cx="8" cy="8" r="4.7" fill="#12a5cf" stroke="#fff" stroke-width="1.2"/><path d="M3.6 9.4C5.4 9 8.4 8 10.8 5.4c.9 1.6.8 3.4-.2 4.9-1.4 2-4.2 2.6-6.2.8-.4-.5-.7-1-.8-1.700z" fill="#fff"/><path d="M11.300 5.2c.6 1.200.7 2.800.1 4.200" stroke="#12a5cf" stroke-width=".7" fill="none"/></svg>
<span class="t" style="left:1307px;top:7px;transform:scaleX(0.9836);line-height:19px;">HeavyLoad</span>
<span class="t" style="left:1284.6px;top:32px;transform:scaleX(0.9422);line-height:19px;">File</span>
<i style="left:1284.6px;top:46px;width:5.072px;height:1px;background:#000;"></i>
<span class="t" style="left:1316.7px;top:32px;transform:scaleX(1.0014);line-height:19px;">Test Options</span>
<i style="left:1340.988px;top:46px;width:8.108px;height:1px;background:#000;"></i>
<span class="t" style="left:1396.6px;top:32px;transform:scaleX(1.0115);line-height:19px;">Tools</span>
<i style="left:1396.6px;top:46px;width:5.072px;height:1px;background:#000;"></i>
<span class="t" style="left:1439px;top:32px;transform:scaleX(1.0252);line-height:19px;">Help</span>
<i style="left:1439.0px;top:46px;width:8.108px;height:1px;background:#000;"></i>
<div style="position:absolute;left:1426px;top:0">
<svg style="left:472px;top:7px" width="17" height="11" viewBox="0 0 17 11"><rect x="1.5" y="0.5" width="10" height="8" fill="#fff" stroke="#5a5e78"/><path d="M4.5 1v7M6.500 1v7" stroke="#a0a4b8"/><rect x="9.5" y="1.500" width="6" height="6" rx="1" fill="#fff" stroke="#5a5e78"/><rect x="11" y="4" width="3" height="2" fill="#4a4e66"/></svg>
<i style="left:517px;top:15px;width:10px;height:1px;background:#000;"></i>
<i style="left:562px;top:10px;width:8px;height:8px;border:1px solid #000;background:#fff"></i>
<svg style="left:607.5px;top:9.5px" width="11" height="11" viewBox="0 0 11 11"><path d="M0.5 0.5 10.5 10.5M10.5 0.5 0.5 10.5" stroke="#000" stroke-width="1.1"/></svg>
</div>
<i style="left:1279px;top:51px;width:784px;height:1px;background:#a0a0a0;"></i>
<i style="left:1279px;top:52px;width:784px;height:32px;background:linear-gradient(#fcfcfc,#f2f2f2 45%,#dedede);"></i>
<svg style="left:1281px;top:55px" width="24" height="24" viewBox="0 0 24 24"><defs><linearGradient id="g1" x1="0" y1="0" x2="0" y2="1"><stop offset="0" stop-color="#8a8a8a"/><stop offset=".42" stop-color="#acacac"/><stop offset=".6" stop-color="#545454"/><stop offset="1" stop-color="#8e8e8e"/></linearGradient><linearGradient id="g2" x1="0" y1="0" x2="0" y2="1"><stop offset="0" stop-color="#4484e4"/><stop offset=".42" stop-color="#80b2f8"/><stop offset=".6" stop-color="#1c5ccc"/><stop offset="1" stop-color="#4690f0"/></linearGradient></defs><ellipse cx="12" cy="13.2" rx="11" ry="10.2" fill="#c4c4c4" opacity=".8"/><circle cx="12" cy="12" r="10.6" fill="url(#g1)" stroke="#4c4c4c" stroke-width=".8"/><path d="M9.600 8.200 16 12 9.600 15.800z" fill="#fff" opacity=".95"/></svg>
<svg style="left:1312px;top:55px" width="24" height="24" viewBox="0 0 24 24"><ellipse cx="12" cy="13.2" rx="11" ry="10.2" fill="#c4c4c4" opacity=".8"/><circle cx="12" cy="12" r="10.6" fill="url(#g2)" stroke="#1c50b4" stroke-width=".8"/><rect x="8" y="8" width="8" height="8" fill="#fff"/><rect x="8" y="13" width="8" height="3" fill="#dcdcdc"/></svg>
<i style="left:1342px;top:54px;width:1px;height:27px;background:#6a6a6a;"></i>
<i style="left:1508px;top:54px;width:1px;height:27px;background:#6a6a6a;"></i>
<svg style="left:1355px;top:56px" width="22" height="22" viewBox="0 0 22 22"><path d="M1 8 11 3.4 21 7.6 11 13z" fill="#6a6a6a"/><path d="M1 8 11 13v3L1 10.6z" fill="#8a8a8a"/><path d="M21 7.6 11 13v3l10-5.6z" fill="#4a4a4a"/><path d="M3 12.4v3M5.6 13.8v3M8.2 15.2v3M13.6 15.2v3M16.2 13.8v3M18.8 12.2v3" stroke="#909090" stroke-width="1.2"/></svg>
<svg style="left:1386px;top:56px" width="22" height="22" viewBox="0 0 22 22"><path d="M4.600 5h12.800L20.600 14v3.600a1 1 0 0 1-1 1H2.400a1 1 0 0 1-1-1V14z" fill="#e0e0e0" stroke="#868686" stroke-width="1"/><path d="M5.200 6h11.600l1.200 4H4z" fill="#8c8c8c"/><path d="M1.6 14h18.8" stroke="#8a8a8a"/><rect x="4" y="15.4" width="3" height="1.2" fill="#8a8a8a"/><rect x="15" y="15.4" width="3" height="1.2" fill="#8a8a8a"/></svg>
<svg style="left:1417px;top:56px" width="22" height="22" viewBox="0 0 22 22"><path d="M1 13 19 3.200 21.600 8.800 3.800 19z" fill="#666"/><path d="M4.200 13.400 18.800 5.600" stroke="#a8a8a8" stroke-width="1.600" stroke-dasharray="2.400 1.200"/></svg>
<svg style="left:1447px;top:55.5px" width="24" height="24" viewBox="0 0 24 24"><defs><radialGradient id="gf" cx=".5" cy=".45" r=".55"><stop offset="0" stop-color="#9a9a9a"/><stop offset=".75" stop-color="#6e6e6e"/><stop offset="1" stop-color="#484848"/></radialGradient></defs><circle cx="12" cy="12" r="11" fill="url(#gf)"/><path d="M12 13.2L3.40 18.50A9.8 9.8 0 0 0 20.60 18.50Z" fill="#d6d6d6"/><path d="M12 13.2L12 5.0M12 13.2L4.90 17.30M12 13.2L19.10 17.30" stroke="#fff" stroke-width="3.3" stroke-linecap="round" fill="none"/></svg>
<svg style="left:1479px;top:56px" width="22" height="22" viewBox="0 0 22 22"><path d="M1.6 4v15" stroke="#a8a8a8" stroke-width="1.6"/><rect x="3.4" y="5" width="17.6" height="11.6" fill="#d8d8d8" stroke="#a0a0a0"/><rect x="4.4" y="16.6" width="9" height="2" fill="#bcbcbc"/><rect x="6" y="7" width="4.6" height="3" fill="#5c5c5c"/><rect x="13" y="7" width="4" height="2.6" fill="#8c8c8c"/><rect x="8.6" y="12" width="3" height="2.6" fill="#5c5c5c"/><rect x="14" y="12" width="4.6" height="2.6" fill="#5c5c5c"/></svg>
<svg style="left:1522px;top:56px" width="22" height="22" viewBox="0 0 22 22"><path d="M4 3.4 9 8.4M7.4 10 17 19.4" stroke="#8c8c8c" stroke-width="3.4" stroke-linecap="round"/><path d="M17.6 3.6 5 18.6" stroke="#7a7a7a" stroke-width="3" stroke-linecap="round"/><circle cx="16.6" cy="5.2" r="3.4" fill="#8a8a8a"/><path d="M16 2l3.4 1-1.6 3.2z" fill="#ededed"/><circle cx="4.6" cy="4" r="2.4" fill="#9a9a9a"/></svg>
<i style="left:1661px;top:81px;width:395.5px;height:1.6px;background:#505050;"></i>
<i style="left:2055px;top:55px;width:1.5px;height:27.6px;background:#505050;"></i>
<i style="left:1660px;top:54px;width:395px;height:27px;background:#cfe4fb;"></i>
<span class="t" style="left:1667.5px;top:53px;font:italic 16px/27px 'Liberation Sans',sans-serif;color:#101830;transform:scaleX(1)">Hard disk full?</span>
<svg style="left:1785px;top:59px" width="12" height="18" viewBox="0 0 12 18"><path d="M2 1.800 10 9.200 2 16.600" fill="none" stroke="#8cc0ea" stroke-width="2.4"/></svg>
<svg style="left:1808px;top:53px" width="26" height="26" viewBox="0 0 26 26"><defs><radialGradient id="gt" cx=".5" cy=".45" r=".55"><stop offset="0" stop-color="#30c8ec"/><stop offset=".75" stop-color="#10a4d4"/><stop offset="1" stop-color="#0870a0"/></radialGradient></defs><circle cx="13" cy="13" r="12" fill="url(#gt)"/><path d="M13 14.2L3.71 19.90A10.8 10.8 0 0 0 22.29 19.90Z" fill="#a8dcec"/><path d="M13 14.2L13 5.199999999999999M13 14.2L5.21 18.70M13 14.2L20.79 18.70" stroke="#fff" stroke-width="3.9" stroke-linecap="round" fill="none"/></svg>
<span class="t" style="left:1838.5px;top:53px;font:15px/27px 'Liberation Sans',sans-serif;color:#101018;transform:scaleX(.99)">Tree<span style="font-weight:bold">Size</span> <span style="font-style:italic">Free</span></span>
<i style="left:1953px;top:59.5px;width:96px;height:17px;border-radius:9px;background:#0c1c48;filter:blur(.6px)"></i>
<i style="left:1952px;top:58.4px;width:96.5px;height:17px;border-radius:9px;background:linear-gradient(#2c4c90,#1c3874)"></i>
<span class="t" style="left:1966px;top:59.1px;font:bold 14px/17px 'Liberation Sans',sans-serif;color:#fff;-webkit-text-stroke:0;transform:scaleX(1.025)">Download</span>
<svg style="left:1480px;top:220px" width="380" height="330" viewBox="1480 220 380 330"><defs><linearGradient id="c1" gradientUnits="userSpaceOnUse" x1="1530" y1="330" x2="1735" y2="440"><stop offset="0" stop-color="#6f6f6f"/><stop offset=".55" stop-color="#7c7c7c"/><stop offset="1" stop-color="#8c8c8c"/></linearGradient><linearGradient id="c2" gradientUnits="userSpaceOnUse" x1="1650" y1="262" x2="1790" y2="400"><stop offset="0" stop-color="#676767"/><stop offset=".45" stop-color="#4a4a4a"/><stop offset="1" stop-color="#5c5c5c"/></linearGradient><linearGradient id="c3" gradientUnits="userSpaceOnUse" x1="1668" y1="446" x2="1762" y2="484"><stop offset="0" stop-color="#8e8e8e"/><stop offset="1" stop-color="#737373"/></linearGradient></defs><polygon points="1641,247.2 1520.4,374.7 1597.4,518.1 1694.2,525.7 1815.8,422.2 1724,311.3" fill="#7a7a7a"/><polygon points="1641,247.2 1724,311.3 1815.8,422.2 1746.5,382.4" fill="url(#c2)" stroke="url(#c2)" stroke-width=".5"/><polygon points="1746.5,382.4 1597.4,518.1 1694.2,525.7 1815.8,422.2" fill="url(#c3)" stroke="url(#c3)" stroke-width=".5"/><polygon points="1641,247.2 1520.4,374.7 1597.4,518.1 1746.5,382.4" fill="url(#c1)" stroke="url(#c1)" stroke-width=".5"/></svg>
<i style="left:1279px;top:714px;width:781px;height:219px;background:linear-gradient(#fcfcfc,#bcbcbc);"></i>
<i style="left:1279px;top:714px;width:781px;height:1px;background:#9a9a9a;"></i>
<i style="left:1279px;top:715px;width:781px;height:1px;background:#c4c4c4;"></i>
<i style="left:1279px;top:714px;width:1px;height:219px;background:#9a9a9a;"></i>
<i style="left:1280px;top:715px;width:1px;height:218px;background:#c4c4c4;"></i>
<i style="left:2060px;top:714px;width:2px;height:219px;background:#fff;"></i>
<svg style="left:1470px;top:716px" width="590" height="216" viewBox="1470 716 590 216"><defs><linearGradient id="bw" x1="0" y1="0" x2="0" y2="1"><stop offset="0" stop-color="#f4f4f4"/><stop offset="1" stop-color="#d4d4d4"/></linearGradient></defs><rect x="1541.5" y="730.5" width="444.0" height="179.0" fill="url(#bw)"/><polygon points="1530.5,741.5 1541.5,730.5 1541.5,909.5 1530.5,920.5" fill="#e6e6e6" opacity=".8"/><polygon points="1530.5,920.5 1541.5,909.5 1985.5,909.5 1974.5,920.5" fill="#dadada"/><path d="M1542.5 880.4H1985.5" stroke="#8c8c8c" stroke-dasharray="4 3" shape-rendering="crispEdges"/><path d="M1534.5 887.4L1538.5 883.4" stroke="#8c8c8c"/><path d="M1542.5 851.3H1985.5" stroke="#8c8c8c" stroke-dasharray="4 3" shape-rendering="crispEdges"/><path d="M1534.5 858.3L1538.5 854.3" stroke="#8c8c8c"/><path d="M1542.5 822.2H1985.5" stroke="#8c8c8c" stroke-dasharray="4 3" shape-rendering="crispEdges"/><path d="M1534.5 829.2L1538.5 825.2" stroke="#8c8c8c"/><path d="M1542.5 793.1H1985.5" stroke="#8c8c8c" stroke-dasharray="4 3" shape-rendering="crispEdges"/><path d="M1534.5 800.1L1538.5 796.1" stroke="#8c8c8c"/><path d="M1542.5 764.0H1985.5" stroke="#8c8c8c" stroke-dasharray="4 3" shape-rendering="crispEdges"/><path d="M1534.5 771.0L1538.5 767.0" stroke="#8c8c8c"/><path d="M1541.5 820.5H1985.5" stroke="#000" stroke-dasharray="3 2" shape-rendering="crispEdges"/><path d="M1530.5 741.5V920.5H1974.5L1985.5 909.5V730.5M1530.5 920.5L1541.5 909.5H1985.5M1541.5 909.5V731M1530.5 741.5l3-3" fill="none" stroke="#000" stroke-width="1"/><path d="M1525.5 920.5H1530.5" stroke="#555" shape-rendering="crispEdges"/><path d="M1528.5 905.9H1530.5" stroke="#555" shape-rendering="crispEdges"/><text x="1524" y="923.1" text-anchor="end" class="ct">0</text><path d="M1525.5 891.3H1530.5" stroke="#555" shape-rendering="crispEdges"/><path d="M1528.5 876.7H1530.5" stroke="#555" shape-rendering="crispEdges"/><text x="1524" y="893.9" text-anchor="end" class="ct">500</text><path d="M1525.5 862.1H1530.5" stroke="#555" shape-rendering="crispEdges"/><path d="M1528.5 847.5H1530.5" stroke="#555" shape-rendering="crispEdges"/><text x="1524" y="864.7" text-anchor="end" class="ct">1 000</text><path d="M1525.5 832.9H1530.5" stroke="#555" shape-rendering="crispEdges"/><path d="M1528.5 818.3H1530.5" stroke="#555" shape-rendering="crispEdges"/><text x="1524" y="835.5" text-anchor="end" class="ct">1 500</text><path d="M1525.5 803.7H1530.5" stroke="#555" shape-rendering="crispEdges"/><path d="M1528.5 789.1H1530.5" stroke="#555" shape-rendering="crispEdges"/><text x="1524" y="806.3" text-anchor="end" class="ct">2 000</text><path d="M1525.5 774.5H1530.5" stroke="#555" shape-rendering="crispEdges"/><path d="M1528.5 759.9H1530.5" stroke="#555" shape-rendering="crispEdges"/><text x="1524" y="777.1" text-anchor="end" class="ct">2 500</text><path d="M1525.5 745.3H1530.5" stroke="#555" shape-rendering="crispEdges"/><text x="1524" y="747.9" text-anchor="end" class="ct">3 000</text><path d="M1985.5 909.5h6" stroke="#555" shape-rendering="crispEdges"/><text x="1993.5" y="911.9" class="ct">0 %</text><path d="M1985.5 891.6h6" stroke="#555" shape-rendering="crispEdges"/><text x="1993.5" y="894.0" class="ct">10 %</text><path d="M1985.5 873.6h6" stroke="#555" shape-rendering="crispEdges"/><text x="1993.5" y="876.0" class="ct">20 %</text><path d="M1985.5 855.7h6" stroke="#555" shape-rendering="crispEdges"/><text x="1993.5" y="858.1" class="ct">30 %</text><path d="M1985.5 837.8h6" stroke="#555" shape-rendering="crispEdges"/><text x="1993.5" y="840.2" class="ct">40 %</text><path d="M1985.5 819.9h6" stroke="#555" shape-rendering="crispEdges"/><text x="1993.5" y="822.2" class="ct">50 %</text><path d="M1985.5 801.9h6" stroke="#555" shape-rendering="crispEdges"/><text x="1993.5" y="804.3" class="ct">60 %</text><path d="M1985.5 784.0h6" stroke="#555" shape-rendering="crispEdges"/><text x="1993.5" y="786.4" class="ct">70 %</text><path d="M1985.5 766.1h6" stroke="#555" shape-rendering="crispEdges"/><text x="1993.5" y="768.5" class="ct">80 %</text><path d="M1985.5 748.1h6" stroke="#555" shape-rendering="crispEdges"/><text x="1993.5" y="750.5" class="ct">90 %</text><path d="M1985.5 730.2h6" stroke="#555" shape-rendering="crispEdges"/><text x="1993.5" y="732.6" class="ct">100 %</text><text transform="translate(1493,829.5) rotate(-90)" text-anchor="middle" class="ct" style="font-size:9.2px;letter-spacing:.6px">FPS</text><text transform="translate(2026,818) rotate(90)" text-anchor="middle" class="ct" style="font-size:11px">CPU Usage</text><polygon points="1536.2,737 1541.8,731.0 1986.0,731.0 1980.4,737" fill="#e00000" stroke="#000" stroke-width="1"/><rect x="1536.2" y="737" width="444.20000000000005" height="2.6" fill="#e00000" stroke="#000" stroke-width="1"/><polygon points="1980.4,737 1986.0,731.0 1986.0,733.6 1980.4,739.6" fill="#e00000" stroke="#000" stroke-width="1"/><path d="M1547.3 739.6V737l5.6 -6.0M1558.4 739.6V737l5.6 -6.0M1569.5 739.6V737l5.6 -6.0M1580.6 739.6V737l5.6 -6.0M1591.7 739.6V737l5.6 -6.0M1602.8 739.6V737l5.6 -6.0M1613.9 739.6V737l5.6 -6.0M1625.0 739.6V737l5.6 -6.0M1636.1 739.6V737l5.6 -6.0M1647.2 739.6V737l5.6 -6.0M1658.4 739.6V737l5.6 -6.0M1669.5 739.6V737l5.6 -6.0M1680.6 739.6V737l5.6 -6.0M1691.7 739.6V737l5.6 -6.0M1702.8 739.6V737l5.6 -6.0M1713.9 739.6V737l5.6 -6.0M1725.0 739.6V737l5.6 -6.0M1736.1 739.6V737l5.6 -6.0M1747.2 739.6V737l5.6 -6.0M1758.3 739.6V737l5.6 -6.0M1769.4 739.6V737l5.6 -6.0M1780.5 739.6V737l5.6 -6.0M1791.6 739.6V737l5.6 -6.0M1802.7 739.6V737l5.6 -6.0M1813.8 739.6V737l5.6 -6.0M1824.9 739.6V737l5.6 -6.0M1836.0 739.6V737l5.6 -6.0M1847.1 739.6V737l5.6 -6.0M1858.2 739.6V737l5.6 -6.0M1869.4 739.6V737l5.6 -6.0M1880.5 739.6V737l5.6 -6.0M1891.6 739.6V737l5.6 -6.0M1902.7 739.6V737l5.6 -6.0M1913.8 739.6V737l5.6 -6.0M1924.9 739.6V737l5.6 -6.0M1936.0 739.6V737l5.6 -6.0M1947.1 739.6V737l5.6 -6.0M1958.2 739.6V737l5.6 -6.0M1969.3 739.6V737l5.6 -6.0" fill="none" stroke="#000" stroke-width=".9"/><polygon points="1530.5,750.4 1536.1,744.4 1938.6,744.4 1942.6,745.6999999999999 1980.3,745.6999999999999 1974.7,751.6999999999999 1937,751.6999999999999 1933,750.4" fill="#ffff00" stroke="#000" stroke-width="1"/><polygon points="1530.5,750.4 1933,750.4 1937,751.6999999999999 1974.7,751.6999999999999 1974.7,754.4999999999999 1937,754.4999999999999 1933,753.1999999999999 1530.5,753.1999999999999" fill="#ffff00" stroke="#000" stroke-width="1"/><polygon points="1974.7,751.6999999999999 1980.3,745.6999999999999 1980.3,748.4999999999999 1974.7,754.4999999999999" fill="#ffff00" stroke="#000" stroke-width="1"/><path d="M1541.6 753.1999999999999V750.4l5.6 -6.0M1552.7 753.1999999999999V750.4l5.6 -6.0M1563.8 753.1999999999999V750.4l5.6 -6.0M1574.9 753.1999999999999V750.4l5.6 -6.0M1586.0 753.1999999999999V750.4l5.6 -6.0M1597.1 753.1999999999999V750.4l5.6 -6.0M1608.2 753.1999999999999V750.4l5.6 -6.0M1619.3 753.1999999999999V750.4l5.6 -6.0M1630.4 753.1999999999999V750.4l5.6 -6.0M1641.5 753.1999999999999V750.4l5.6 -6.0M1652.7 753.1999999999999V750.4l5.6 -6.0M1663.8 753.1999999999999V750.4l5.6 -6.0M1674.9 753.1999999999999V750.4l5.6 -6.0M1686.0 753.1999999999999V750.4l5.6 -6.0M1697.1 753.1999999999999V750.4l5.6 -6.0M1708.2 753.1999999999999V750.4l5.6 -6.0M1719.3 753.1999999999999V750.4l5.6 -6.0M1730.4 753.1999999999999V750.4l5.6 -6.0M1741.5 753.1999999999999V750.4l5.6 -6.0M1752.6 753.1999999999999V750.4l5.6 -6.0M1763.7 753.1999999999999V750.4l5.6 -6.0M1774.8 753.1999999999999V750.4l5.6 -6.0M1785.9 753.1999999999999V750.4l5.6 -6.0M1797.0 753.1999999999999V750.4l5.6 -6.0M1808.1 753.1999999999999V750.4l5.6 -6.0M1819.2 753.1999999999999V750.4l5.6 -6.0M1830.3 753.1999999999999V750.4l5.6 -6.0M1841.4 753.1999999999999V750.4l5.6 -6.0M1852.5 753.1999999999999V750.4l5.6 -6.0M1863.7 753.1999999999999V750.4l5.6 -6.0M1874.8 753.1999999999999V750.4l5.6 -6.0M1885.9 753.1999999999999V750.4l5.6 -6.0M1897.0 753.1999999999999V750.4l5.6 -6.0M1908.1 753.1999999999999V750.4l5.6 -6.0M1919.2 753.1999999999999V750.4l5.6 -6.0M1930.3 753.1999999999999V750.4l5.6 -6.0M1941.4 754.4999999999999V751.6999999999999l5.6 -6.0M1952.5 754.4999999999999V751.6999999999999l5.6 -6.0M1963.6 754.4999999999999V751.6999999999999l5.6 -6.0" fill="none" stroke="#000" stroke-width=".9"/></svg>
<i style="left:1292px;top:740px;width:150px;height:74px;background:#000;filter:blur(1.1px);opacity:.7;"></i>
<i style="left:1289px;top:737px;width:149px;height:73px;background:#fff;border:1px solid #000"></i>
<i class="cb" style="left:1293px;top:742px"></i>
<svg style="left:1293px;top:742px" width="12" height="12" viewBox="0 0 12 12"><path d="M3 5.6 5 7.8 9.2 3.2" fill="none" stroke="#000" stroke-width="1.9"/></svg>
<i style="left:1310px;top:742px;width:20px;height:11px;background:#e00000;border:1px solid #000"></i>
<span class="a" style="left:1338.5px;top:742px;font-size:10.6px;line-height:13px;transform:scaleX(0.976);transform-origin:0 0">CPU Usage</span>
<i class="cb" style="left:1293px;top:759px"></i>
<i style="left:1310px;top:759px;width:20px;height:11px;background:#4cb838;border:1px solid #000"></i>
<span class="a" style="left:1338.5px;top:759px;font-size:10.6px;line-height:13px;transform:scaleX(1.018);transform-origin:0 0">Disk Space</span>
<i class="cb" style="left:1293px;top:776px"></i>
<i style="left:1310px;top:776px;width:20px;height:11px;background:#206cc4;border:1px solid #000"></i>
<span class="a" style="left:1338.5px;top:776px;font-size:10.6px;line-height:13px;transform:scaleX(1.006);transform-origin:0 0">Free Memory</span>
<i class="cb" style="left:1293px;top:793px"></i>
<svg style="left:1293px;top:793px" width="12" height="12" viewBox="0 0 12 12"><path d="M3 5.6 5 7.8 9.2 3.2" fill="none" stroke="#000" stroke-width="1.9"/></svg>
<i style="left:1310px;top:793px;width:20px;height:11px;background:#ffff00;border:1px solid #000"></i>
<span class="a" style="left:1338.5px;top:793px;font-size:10.6px;line-height:13px;transform:scaleX(1.027);transform-origin:0 0">Frames per Second</span>
<span class="t" style="left:1291px;top:840px;transform:scaleX(0.9726);">Update Chart every</span>
<i style="left:1291px;top:860px;width:37px;height:21px;background:#fff;border:1px solid #7a7a7a"></i>
<span class="t" style="left:1294px;top:862px;transform:scaleX(0.9099);">3</span>
<i style="left:1313px;top:862px;width:14px;height:8px;background:#f0f0f0;border:1px solid #adadad;box-sizing:content-box"></i>
<svg style="left:1313px;top:862px" width="16" height="10" viewBox="0 0 16 10"><path d="M4.5 6.5 7.5 3.5 10.5 6.5z" transform="translate(.5,0)" fill="#000"/></svg>
<i style="left:1313px;top:872px;width:14px;height:8px;background:#f0f0f0;border:1px solid #adadad;box-sizing:content-box"></i>
<svg style="left:1313px;top:872px" width="16" height="10" viewBox="0 0 16 10"><path d="M4.5 3.5 7.5 6.5 10.5 3.5z" transform="translate(.5,0)" fill="#000"/></svg>
<span class="t" style="left:1334.5px;top:862px;transform:scaleX(0.9796);">second(s)</span>
<span class="t" style="left:1291px;top:891px;transform:scaleX(1.0018);">Test runtime:</span>
<span class="t" style="left:1293.5px;top:907px;transform:scaleX(0.9100);">00:13:08</span>
<i style="left:1279px;top:933px;width:783px;height:21px;background:#f0f0f0;"></i>
<i style="left:1368px;top:935px;width:8px;height:17px;background:#10b020;"></i>
<i style="left:1383px;top:935px;width:1px;height:17px;background:#d7d7d7;"></i>
<i style="left:1509px;top:935px;width:1px;height:17px;background:#d7d7d7;"></i>
<i style="left:1606px;top:935px;width:1px;height:17px;background:#d7d7d7;"></i>
<i style="left:1660px;top:935px;width:1px;height:17px;background:#d7d7d7;"></i>
<span class="t" style="left:1388px;top:936px;transform:scaleX(0.9720);">7511 MB Memory Free</span>
<span class="t" style="left:1514px;top:936px;transform:scaleX(0.9145);">100% CPU Usage</span>
<span class="t" style="left:1611px;top:936px;transform:scaleX(0.8723);">2900 FPS</span>
</div>
<i style="left:0px;top:0px;width:784px;height:1px;background:#1883d7;"></i>
<i style="left:783px;top:0px;width:1px;height:955px;background:#1883d7;"></i>
<i style="left:0px;top:954px;width:784px;height:1px;background:#1883d7;"></i>
</div>
<i style="left:0px;top:954px;width:1271px;height:1px;background:#fff;"></i>
</body></html>
